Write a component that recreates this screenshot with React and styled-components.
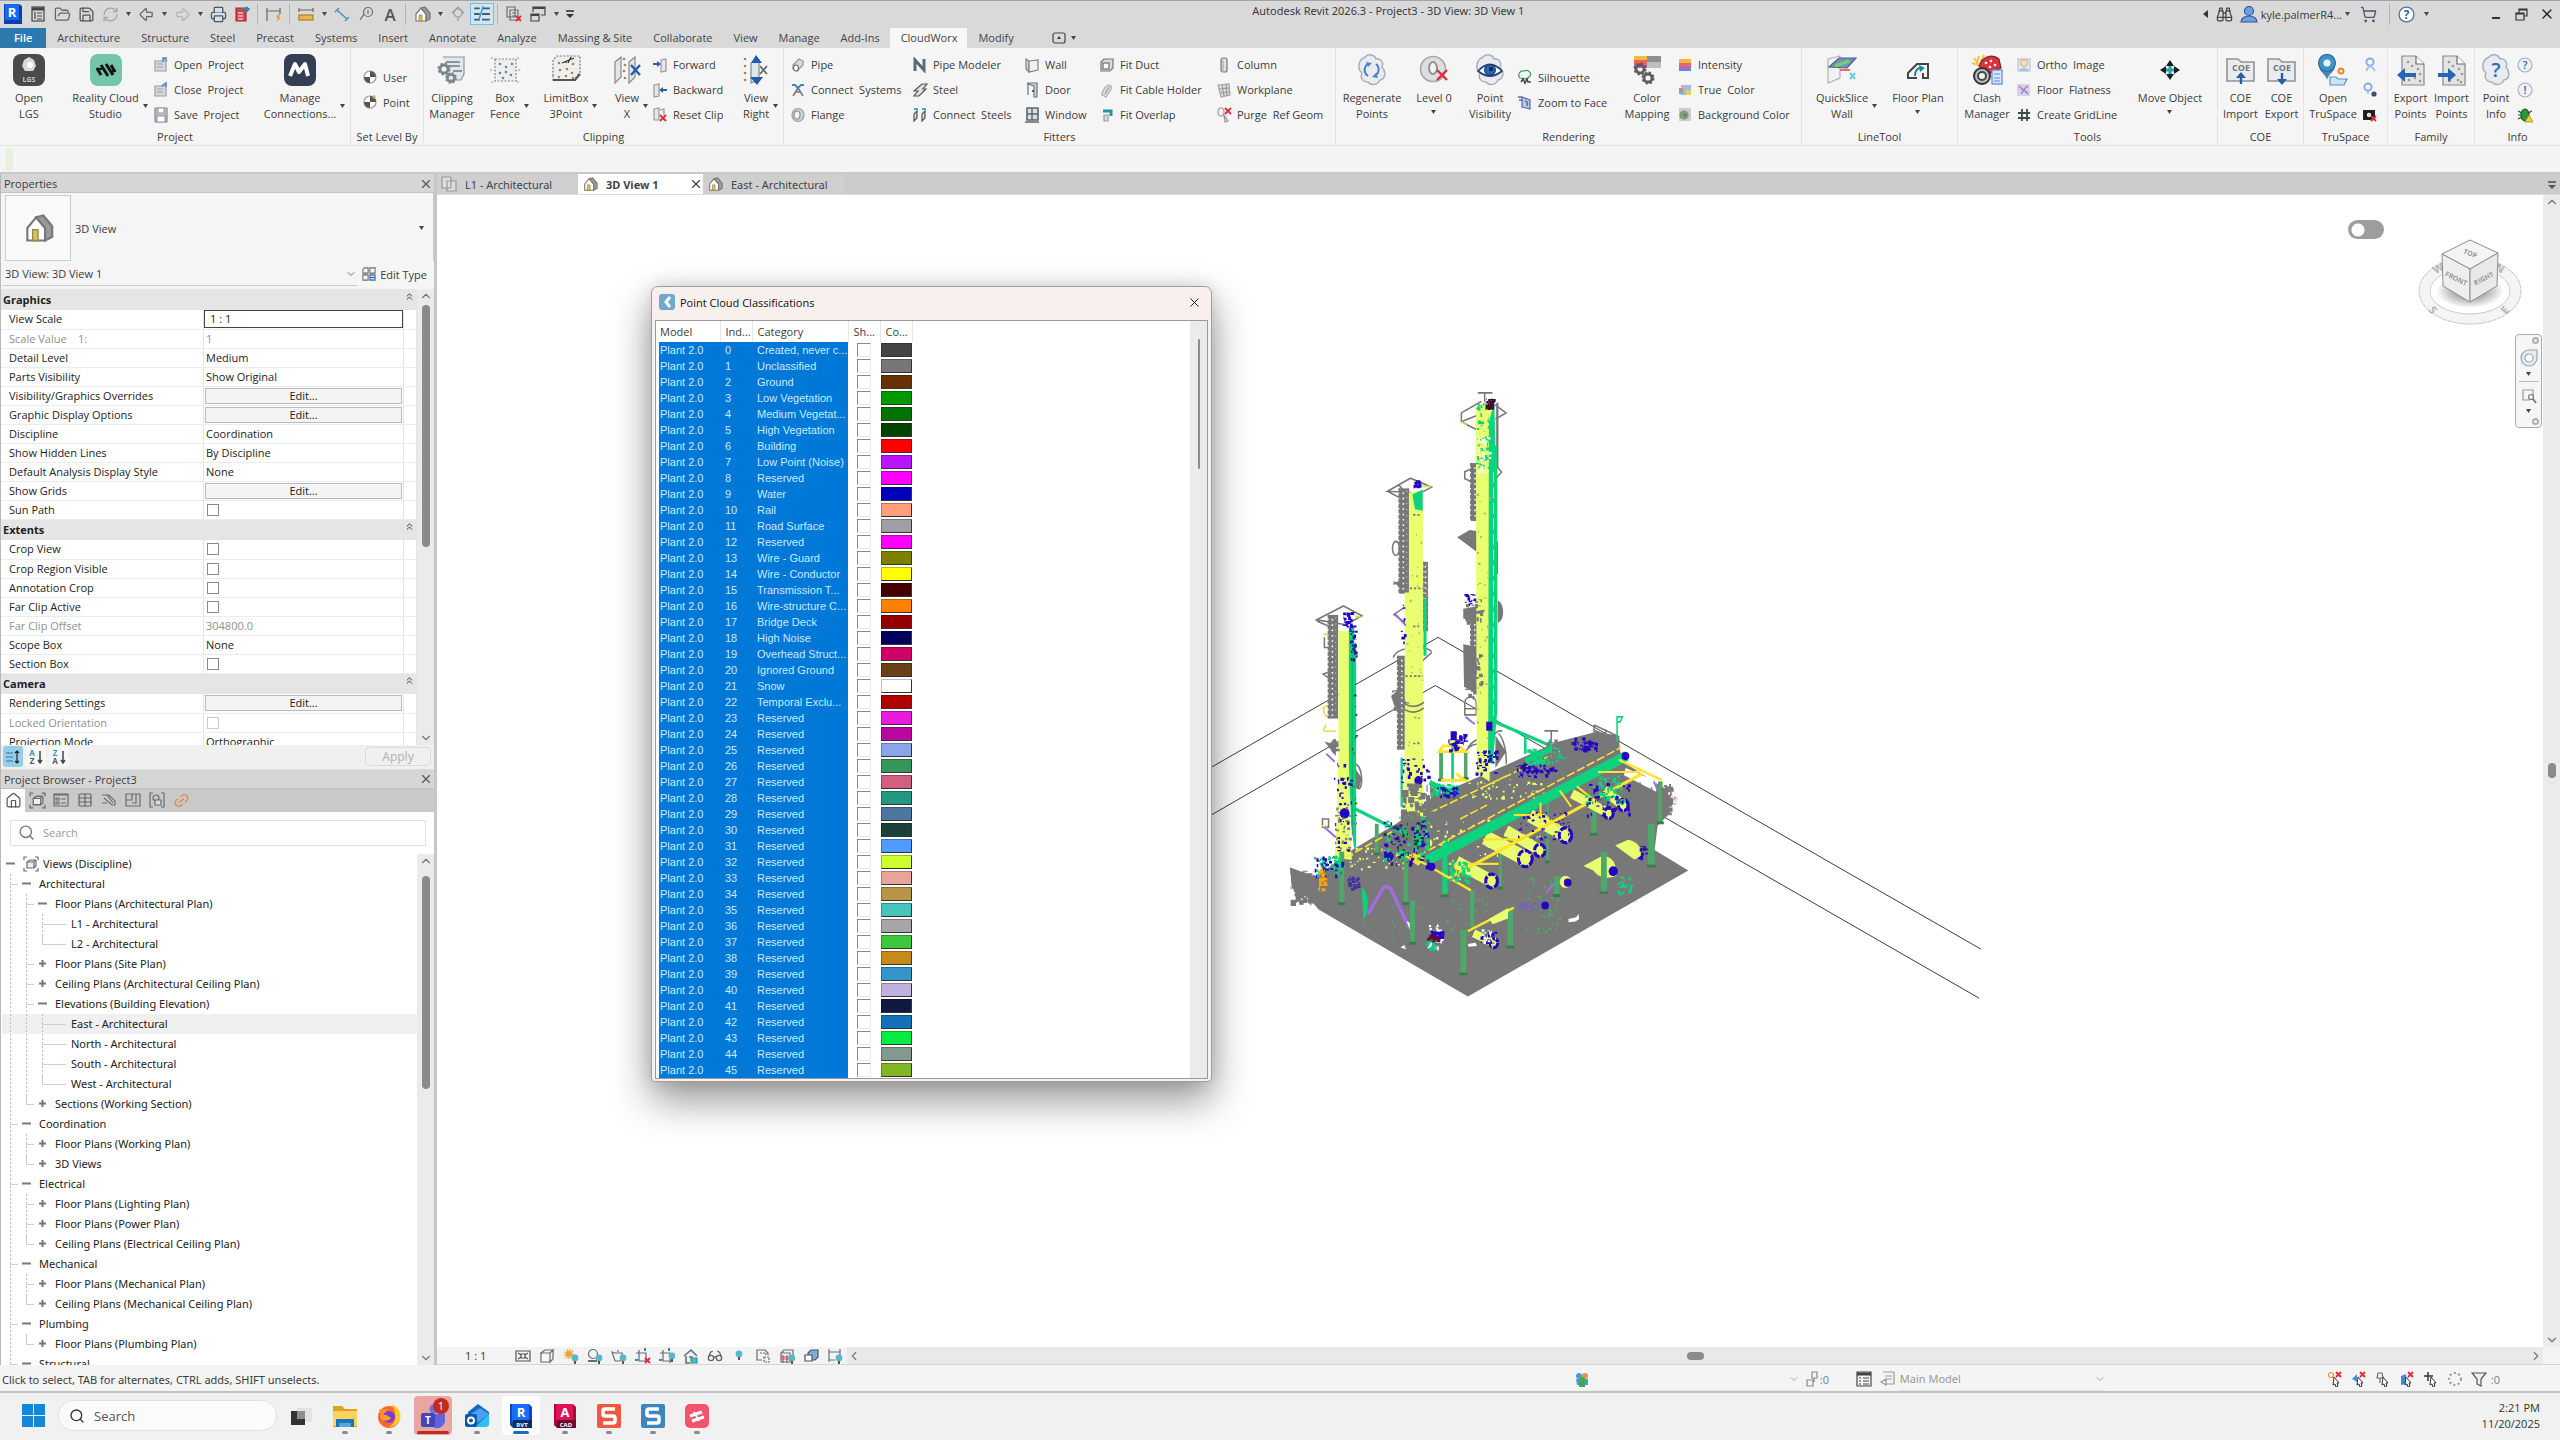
import React, { useState } from "react";
import styled, { createGlobalStyle, css } from "styled-components";
import {
  ArrowBigLeft,
  ArrowBigRight,
  Binoculars,
  ChevronDown,
  ChevronLeft,
  ChevronRight,
  ChevronUp,
  ChevronsUp,
  FolderOpen,
  Glasses,
  House,
  Link2,
  Printer,
  RefreshCw,
  Save,
  Search,
  ShoppingCart,
  Table,
  X,
} from "lucide-react";

const GlobalStyle = createGlobalStyle`
  * { box-sizing: border-box; }
  body {
    margin: 0;
    font-family: "Open Sans", "Noto Sans", sans-serif;
    font-size: 11px;
    color: #3c3c3c;
    background: #fff;
  }
  button, input, select {
    font: inherit;
    color: inherit;
    margin: 0;
    padding: 0;
    border: 0;
    background: none;
  }
  svg { display: block; flex: none; }
`;

const wideFont = `"Noto Sans", "Open Sans", sans-serif`;

/* ---------- small drawings ---------- */

const Ico = ({ s = 16, v = 16, children }) => (
  <svg width={s} height={s} viewBox={`0 0 ${v} ${v}`} fill="none" stroke="#666d74" strokeWidth="1.2">
    {children}
  </svg>
);

const Big = ({ children }) => (
  <Ico s={32} v={32}>
    {children}
  </Ico>
);

const Caret = () => (
  <svg width="5" height="4" viewBox="0 0 5 4">
    <path d="M0 0h5L2.5 4z" fill="#444" />
  </svg>
);

const blob =
  "M9 3c4-4 10-2 11 2 5-1 8 4 6 8 4 4 4 12-2 13-2 5-9 6-12 2-6 0-8-5-6-9-5-4-4-13 3-16z";

const Blob = () => <path d={blob} fill="#e8ecf0" stroke="#a9b0b7" strokeWidth="1.5" />;

const Gear = ({ x, y, r, c = "#7c848b" }) => (
  <g>
    <circle cx={x} cy={y} r={r} stroke={c} strokeWidth={r * 0.7} />
    <circle cx={x} cy={y} r={r * 1.4} stroke={c} strokeWidth={r * 0.45} strokeDasharray={`${r * 0.6} ${r * 0.5}`} />
  </g>
);

const Dots = ({ c = "#a48355", pts }) => (
  <g fill={c} stroke="none">
    {pts.map(([x, y]) => (
      <circle key={`${x}-${y}`} cx={x} cy={y} r="1.3" />
    ))}
  </g>
);

const grid9 = [[9, 9], [16, 8], [23, 10], [10, 16], [17, 15], [22, 19], [9, 23], [16, 22], [23, 24]];

const RedX = ({ x, y, s = 5 }) => (
  <path d={`M${x} ${y}l${s} ${s}m0 ${-s}l${-s} ${s}`} stroke="#e02b35" strokeWidth={s > 6 ? 2.4 : 1.8} />
);

const Bulb = ({ x, y }) => (
  <g stroke="none">
    <circle cx={x} cy={y} r="3.4" fill="#57b9c6" />
    <rect x={x - 1} y={y + 3} width="2" height="3" fill="#555" />
  </g>
);

const Folder32 = () => (
  <path d="M2 5h11l3 3h13v19H2z" fill="#e9ebed" stroke="#8d949a" strokeWidth="1.6" />
);

const big = {
  lgs: (
    <Big>
      <rect x="0" y="0" width="32" height="32" rx="8" fill="#4a4a4a" stroke="none" />
      <path d="M11 6l5-3 5 3 2 6-3 5h-8l-3-5z" fill="#d9d9d9" stroke="none" />
      <circle cx="17" cy="11" r="3" fill="#fff" stroke="none" />
      <text x="16" y="28" fontSize="7" fontWeight="700" textAnchor="middle" fill="#ccc" stroke="none">LGS</text>
    </Big>
  ),
  reality: (
    <Big>
      <rect width="32" height="32" rx="8" fill="#73c5ab" stroke="none" />
      <path d="M7 14l4 7M11 11l7 11M16 10l7 11M21 11l4 7" stroke="#151515" strokeWidth="3" />
      <path d="M6 15h6M20 17h6" stroke="#151515" strokeWidth="2" />
    </Big>
  ),
  manage: (
    <Big>
      <rect width="32" height="32" rx="8" fill="#343e54" stroke="none" />
      <path d="M6 22l5-12 4 8 6-8 3 12" stroke="#fff" strokeWidth="4" strokeLinejoin="round" />
    </Big>
  ),
  clipManager: (
    <Big>
      <path d="M7 3h21v17l-3 6H14" fill="#dfe8ee" stroke="#8b959d" />
      <path d="M10 8h14M10 12h14M17 17h9" stroke="#8b959d" strokeWidth="2" />
      <Gear x={8} y={15} r={4} />
      <Gear x={15} y={24} r={3.6} />
    </Big>
  ),
  boxFence: (
    <Big>
      <rect x="6" y="5" width="21" height="22" fill="#eceff1" stroke="#80878d" strokeDasharray="2 1.5" />
      <Dots c="#79828a" pts={[[11, 10], [17, 13], [23, 10], [11, 19], [17, 18], [22, 21], [14, 24]]} />
      <Dots c="#c9ced2" pts={[[3, 4], [29, 4], [3, 28], [29, 28], [2, 16], [30, 16]]} />
    </Big>
  ),
  limitBox: (
    <Big>
      <path d="M3 22V6l4-4h23v16l-6 8H3z" fill="#efefed" stroke="#777" strokeDasharray="2 1.5" />
      <Dots pts={grid9} />
      <path d="M3 26h22l5-6" stroke="#555" strokeWidth="2" />
      <path d="M24 4L12 9M21 3l-3 6" stroke="#333" />
    </Big>
  ),
  viewX: (
    <Big>
      <path d="M4 8l6-5v20l-6 6zM18 8l6-5v20l-6 6z" fill="#e3e6e8" stroke="#858c92" />
      <Dots pts={[[13, 5], [14, 11], [13, 17], [14, 24]]} />
      <path d="M20 11l9 10m0-10l-9 10" stroke="#1f5db0" strokeWidth="2.4" />
    </Big>
  ),
  viewRight: (
    <Big>
      <path d="M11 9l8-3v20l-8 3z" fill="#e3e6e8" stroke="#858c92" />
      <path d="M11 9L16 1l6 8zM10 23h13l-6 8z" fill="#1f5db0" stroke="none" />
      <Dots pts={[[5, 5], [5, 12], [5, 19], [5, 26]]} />
      <path d="M20 12l7 8m0-8l-7 8" stroke="#666" strokeWidth="1.8" />
    </Big>
  ),
  regenerate: (
    <Big>
      <Blob />
      <path d="M12 10a7 7 0 0 0 0 12M20 21a7 7 0 0 0 0-11" stroke="#4a82cc" strokeWidth="2" />
      <path d="M10 8l6 1-4 4zM22 24l-6-1 4-4z" fill="#4a82cc" stroke="none" />
    </Big>
  ),
  level: (
    <Big>
      <circle cx="15" cy="15" r="12.5" fill="#dcdfe1" stroke="#a4a9ad" strokeWidth="1.6" />
      <ellipse cx="15" cy="14" rx="4" ry="6" fill="#f3f3f3" stroke="#8d9398" strokeWidth="2" />
      <RedX x={19} y={16} s={10} />
    </Big>
  ),
  visibility: (
    <Big>
      <Blob />
      <path d="M4 17Q16 4 28 17 16 27 4 17z" fill="#fff" stroke="#23497d" strokeWidth="1.8" />
      <circle cx="16" cy="16" r="5.4" fill="#2b64b8" stroke="#173b70" />
      <circle cx="17" cy="15" r="2" fill="#0f2340" stroke="none" />
    </Big>
  ),
  colorMap: (
    <Big>
      <path d="M3 2h13v4H3z" fill="#f3bb3b" stroke="none" />
      <path d="M3 6h13v4H3z" fill="#ef5d5d" stroke="none" />
      <path d="M3 10h13v4H3z" fill="#d25cbb" stroke="none" />
      <path d="M16 2h14v12H16z" fill="#8f8f8f" stroke="none" />
      <path d="M16 8h14v6H16z" fill="#bdbdbd" stroke="none" />
      <Gear x={9} y={15} r={4} c="#5d5d5d" />
      <Gear x={17} y={24} r={4} c="#5d5d5d" />
    </Big>
  ),
  quickSlice: (
    <Big>
      <path d="M2 5l12-3v22L2 29z" fill="#f2f2f2" stroke="#b3b3b3" />
      <path d="M3 13L13 4h17l-9 10z" fill="#6b94c7" stroke="#3f6597" />
      <path d="M9 12l14-5" stroke="#7ccf5a" strokeWidth="3" />
      <path d="M14 16h10" stroke="#ef6a6a" strokeWidth="2" />
      <path d="M24 19l5 6m0-6l-5 6" stroke="#6ccae8" strokeWidth="2" />
    </Big>
  ),
  floorPlan: (
    <Big>
      <path d="M15 24H6v-5l9-9h11v14h-5v-5" stroke="#444" strokeWidth="2" />
      <path d="M13 22c0-5 2-8 6-8" stroke="#168898" strokeWidth="2" />
      <path d="M17 11l6 3-5 4z" fill="#168898" stroke="none" />
    </Big>
  ),
  clash: (
    <Big>
      <path d="M8 2l-2 6M3 4l4 6M1 9l6 2M13 1l-3 6" stroke="#ffc234" strokeWidth="2" />
      <path d="M8 12c3-9 13-13 20-7l2 9-13 6z" fill="#d9333e" stroke="#7e232a" />
      <Dots c="#fff" pts={[[15, 9], [20, 7], [24, 11], [19, 13]]} />
      <circle cx="11" cy="22" r="8" fill="#b9bcbf" stroke="#333" strokeWidth="2" />
      <circle cx="11" cy="22" r="4" fill="#f0f0f0" stroke="#444" strokeWidth="2" />
      <rect x="21" y="16" width="10" height="14" fill="#dbe9ff" stroke="#5b85d9" />
      <path d="M23 20h6M23 24h6M23 27h6" stroke="#5b85d9" />
    </Big>
  ),
  move: (
    <Big>
      <path d="M16 6l4 6h-8zM16 26l4-6h-8zM6 16l6-4v8zM26 16l-6-4v8z" fill="#1d1d1d" stroke="none" />
      <path d="M12 16h8M16 12v8" stroke="#28a5b5" strokeWidth="3" />
    </Big>
  ),
  coeImport: (
    <Big>
      <Folder32 />
      <text x="16" y="17" fontSize="9" fontWeight="700" textAnchor="middle" fill="#70777d" stroke="none">COE</text>
      <path d="M16 30v-8" stroke="#285ea8" strokeWidth="2.4" />
      <path d="M11 24l5-6 5 6z" fill="#285ea8" stroke="none" />
    </Big>
  ),
  coeExport: (
    <Big>
      <Folder32 />
      <text x="16" y="17" fontSize="9" fontWeight="700" textAnchor="middle" fill="#70777d" stroke="none">COE</text>
      <path d="M16 19v8" stroke="#285ea8" strokeWidth="2.4" />
      <path d="M11 25l5 6 5-6z" fill="#285ea8" stroke="none" />
    </Big>
  ),
  truSpace: (
    <Big>
      <path d="M2 12c0 6 7 8 8 14 1-6 8-8 8-14z" fill="#4f83b5" stroke="none" />
      <circle cx="10" cy="9" r="8.5" fill="#3e93cb" stroke="#316a98" />
      <circle cx="10" cy="9" r="3.6" fill="#e7f2fa" stroke="none" />
      <circle cx="24" cy="17" r="2.5" stroke="#e8852d" strokeWidth="2" />
      <path d="M13 23h6l2 2h9l-3 6H13z" fill="#cfe2f2" stroke="#5e93bd" />
    </Big>
  ),
  exportPts: (
    <Big>
      <path d="M7 2h14l8 8v21H7z" fill="#e4e5e3" stroke="#86898b" />
      <path d="M21 2v8h8" fill="#fff" />
      <Dots c="#9c9985" pts={[[13, 8], [17, 12], [23, 15], [14, 26], [20, 24], [25, 27], [25, 20]]} />
      <path d="M21 21H8" stroke="#2a64b4" strokeWidth="4" />
      <path d="M10 14v14l-8-7z" fill="#2a64b4" stroke="none" />
    </Big>
  ),
  importPts: (
    <Big>
      <path d="M7 2h14l8 8v21H7z" fill="#e4e5e3" stroke="#86898b" />
      <path d="M21 2v8h8" fill="#fff" />
      <Dots c="#9c9985" pts={[[13, 8], [17, 12], [23, 15], [14, 27], [22, 26], [25, 28], [26, 20]]} />
      <path d="M2 21h12" stroke="#2a64b4" strokeWidth="4" />
      <path d="M12 14v14l8-7z" fill="#2a64b4" stroke="none" />
    </Big>
  ),
  pointInfo: (
    <Big>
      <Blob />
      <text x="16" y="23" fontSize="20" fontWeight="600" textAnchor="middle" fill="#3165b5" stroke="none">?</text>
    </Big>
  ),
};

const ProjectDoc = ({ arrow }) => (
  <Ico>
    <path d="M2 4h11v10H2z" fill="#d5d9dc" stroke="#9aa0a5" />
    <path d="M4 7h6M4 10h6" stroke="#9aa0a5" />
    <path d={arrow} stroke="#4f8cc9" strokeWidth="1.6" />
  </Ico>
);

const Target = ({ extra }) => (
  <Ico>
    <circle cx="8" cy="8" r="6" fill="#fff" stroke="#999" />
    <path d="M8 2a6 6 0 0 1 6 6H8zM8 14a6 6 0 0 1-6-6h6z" fill="#555" stroke="none" />
    {extra}
  </Ico>
);

const small = {
  open: <ProjectDoc arrow="M10 5V1h4M11 1l3 3" />,
  close: <ProjectDoc arrow="M9 4l4-3v4" />,
  save: (
    <Ico>
      <path d="M2 1h12v14H2z" fill="#b9bec3" stroke="#888e94" />
      <path d="M5 1h6v5H5zM4 9h8v6H4z" fill="#fff" stroke="#9aa0a5" />
    </Ico>
  ),
  user: <Target />,
  point: <Target extra={<path d="M12 1v4M10 3h4" stroke="#e0a23a" />} />,
  forward: (
    <Ico>
      <path d="M9 3l5-1v12l-5 1z" fill="#e5e5e5" stroke="#999" />
      <path d="M1 7h5" stroke="#2461b0" strokeWidth="2" />
      <path d="M5 4l4 3-4 3z" fill="#2461b0" stroke="none" />
    </Ico>
  ),
  backward: (
    <Ico>
      <path d="M2 3l5-1v12l-5 1z" fill="#e5e5e5" stroke="#999" />
      <path d="M10 8h5" stroke="#2461b0" strokeWidth="2" />
      <path d="M11 5v6L7 8z" fill="#2461b0" stroke="none" />
    </Ico>
  ),
  reset: (
    <Ico>
      <path d="M2 2l5-1v12H2zM8 3l4-1v6" fill="#e5e5e5" stroke="#999" />
      <RedX x={8} y={8} s={6} />
    </Ico>
  ),
  pipe: (
    <Ico>
      <path d="M3 8l6-6 4 2v4l-6 6-4-2z" fill="#d9dcdf" stroke="#8d9398" />
      <ellipse cx="6" cy="11" rx="2.5" ry="3" fill="#fff" />
    </Ico>
  ),
  connectSys: (
    <Ico>
      <path d="M2 3h3l3 3 3-3h3" stroke="#4586b8" strokeWidth="2" />
      <path d="M8 6L3 14M8 6l5 8M5 10h6" stroke="#757b80" strokeWidth="1.6" />
    </Ico>
  ),
  flange: (
    <Ico>
      <ellipse cx="8" cy="8" rx="6" ry="6.5" fill="#cfd3d6" stroke="#9ba0a5" />
      <ellipse cx="7" cy="8" rx="3" ry="4" fill="#f5f5f5" stroke="#888e94" />
    </Ico>
  ),
  pipeModeler: (
    <Ico>
      <path d="M3 14V3l9 10V2" stroke="#5e6a75" strokeWidth="3" />
    </Ico>
  ),
  steel: (
    <Ico>
      <path d="M2 9l8-7h5l-4 5h3l-7 7H2l4-5z" fill="#e0e2e4" stroke="#555" />
    </Ico>
  ),
  connectSteels: (
    <Ico>
      <path d="M2 2h4M10 2h4" stroke="#32b5bd" strokeWidth="2" />
      <path d="M2 14V7l3-3v7zM10 14V7l3-3v7z" fill="#d5d8da" stroke="#555" />
    </Ico>
  ),
  wall: (
    <Ico>
      <path d="M2 2l3 2v11l-3-3z" fill="#cfd6da" stroke="#7d858b" />
      <path d="M5 4l9-1v10l-9 2z" fill="#eef1f3" stroke="#7d858b" />
    </Ico>
  ),
  door: (
    <Ico>
      <path d="M3 1h10v14h-3V4L4 2v11" fill="#cfd6da" stroke="#6c747a" />
      <circle cx="9" cy="9" r="1" fill="#333" stroke="none" />
    </Ico>
  ),
  window: (
    <Ico>
      <path d="M3 1h11v12H3z" fill="#d7dfe7" stroke="#5c656d" strokeWidth="1.6" />
      <path d="M8 1v12M3 7h11M1 15h14" stroke="#5c656d" strokeWidth="1.4" />
    </Ico>
  ),
  duct: (
    <Ico>
      <path d="M2 5l3-3h9v9l-3 3H2z" fill="#d9dcde" stroke="#777" />
      <rect x="4" y="6" width="6" height="6" fill="#fff" />
    </Ico>
  ),
  cable: (
    <Ico>
      <path d="M3 13c0-4 4-10 7-10s3 3 1 6l-4 6z" fill="#dadcde" stroke="#a9adb0" />
      <path d="M6 12l4-7" stroke="#999" />
    </Ico>
  ),
  overlap: (
    <Ico>
      <path d="M4 4h8v5" stroke="#2b8fa8" strokeWidth="3" />
      <path d="M5 8h4v6H5z" fill="#d8dcdf" stroke="#999" />
    </Ico>
  ),
  column: (
    <Ico>
      <rect x="5" y="1" width="6" height="14" rx="2" fill="#e0e3e5" stroke="#777" />
      <path d="M7 3v11" stroke="#aaa" />
    </Ico>
  ),
  workplane: (
    <Ico>
      <path d="M2 3l11-1 1 11-9 2z" fill="#dcdcdc" stroke="#a5a5a5" />
      <path d="M6 3l2 11M10 2l1 12M3 7l11-1M4 11l10-1" stroke="#999" />
    </Ico>
  ),
  purge: (
    <Ico>
      <ellipse cx="5" cy="5" rx="3" ry="4" stroke="#999" />
      <path d="M8 8l4 6-3 1z" fill="#ddd" stroke="#999" />
      <RedX x={9} y={1} s={6} />
    </Ico>
  ),
  silhouette: (
    <Ico>
      <path d="M3 9C0 6 3 1 7 2c4-2 8 2 6 5l-3 3z" fill="#eef7f1" stroke="#3f9a66" />
      <path d="M4 13l2-3 2 4 2-4 1 3h3" stroke="#444" strokeWidth="1.5" />
    </Ico>
  ),
  zoomFace: (
    <Ico>
      <path d="M5 3l8 3v9l-8-2z" fill="#b9c7e4" stroke="#5a6fa5" />
      <path d="M1 3h4M2 6h4M8 7c2 0 3 2 2 5" stroke="#5a6fa5" strokeWidth="1.5" />
    </Ico>
  ),
  intensity: (
    <Ico>
      <path d="M2 2h12v4H2z" fill="#f2b73d" stroke="none" />
      <path d="M2 6h12v4H2z" fill="#ee5f74" stroke="none" />
      <path d="M2 10h12v4H2z" fill="#7a7ddb" stroke="none" />
    </Ico>
  ),
  trueColor: (
    <Ico>
      <path d="M4 3h10v10H4z" fill="#8fc4e8" stroke="none" />
      <path d="M4 3h5v5H4z" fill="#f09fbd" stroke="none" />
      <path d="M9 8h5v5H9z" fill="#f1cf57" stroke="none" />
      <path d="M2 6h4v6H2z" fill="#9a9fa5" stroke="none" />
    </Ico>
  ),
  background: (
    <Ico>
      <rect x="2" y="1" width="12" height="13" fill="#ccc" stroke="none" />
      <circle cx="7" cy="8" r="4" fill="#63b07f" stroke="#8f8f8f" />
      <circle cx="8" cy="8" r="1.6" fill="#d9484e" stroke="none" />
    </Ico>
  ),
  ortho: (
    <Ico>
      <rect x="2" y="2" width="12" height="12" fill="#dfe9f4" stroke="#b7c7da" />
      <circle cx="8" cy="6" r="3.4" fill="#f6dfb9" stroke="#d8b685" />
      <path d="M3 14c1-4 9-4 10 0z" fill="#a9bfdc" stroke="none" />
    </Ico>
  ),
  flatness: (
    <Ico>
      <rect x="1" y="2" width="13" height="12" fill="#d8d0ec" stroke="none" />
      <path d="M3 4l4 4 5-4M5 12l3-4 4 4" stroke="#9a78bb" />
    </Ico>
  ),
  gridLine: (
    <Ico>
      <path d="M6 2v12M11 2v12M2 6h12M2 11h12" stroke="#3f4b4b" strokeWidth="1.8" />
    </Ico>
  ),
  pin: (
    <Ico>
      <circle cx="8" cy="5" r="3.6" stroke="#83aee8" strokeWidth="2" />
      <path d="M8 9c-2 2-4 2-3 5M8 9c3 1 4 3 5 5" stroke="#a6c6f0" strokeWidth="2" />
    </Ico>
  ),
  pinCam: (
    <Ico>
      <circle cx="6" cy="5" r="3.6" stroke="#83aee8" strokeWidth="2" />
      <path d="M6 9v3" stroke="#a6c6f0" strokeWidth="2" />
      <circle cx="12" cy="12" r="2.6" fill="#3e4c6d" stroke="none" />
    </Ico>
  ),
  camX: (
    <Ico>
      <path d="M1 3h12v10H1z" fill="#222" stroke="none" />
      <circle cx="7" cy="8" r="3" fill="#ddd" stroke="#000" />
      <RedX x={9} y={9} s={5} />
    </Ico>
  ),
  ask: (
    <Ico>
      <circle cx="8" cy="8" r="7" fill="#eef1f5" stroke="#a8afb7" />
      <text x="8" y="12" fontSize="11" fontWeight="600" textAnchor="middle" fill="#3165b5" stroke="none">?</text>
    </Ico>
  ),
  alert: (
    <Ico>
      <circle cx="8" cy="8" r="7" fill="#eef1f5" stroke="#a8afb7" />
      <text x="8" y="12" fontSize="11" fontWeight="600" textAnchor="middle" fill="#3165b5" stroke="none">!</text>
    </Ico>
  ),
  bug: (
    <Ico>
      <ellipse cx="8" cy="8" rx="4" ry="6" fill="#259a36" stroke="#145c20" />
      <path d="M1 4l4 2M1 8h3M1 12l4-2M15 4l-4 2" stroke="#145c20" />
      <path d="M12 8l4 7H8z" fill="#f1d335" stroke="#a78f14" strokeWidth="0.8" />
    </Ico>
  ),
};

const Cube = ({ s = 16 }) => (
  <Ico s={s}>
    <path d="M2 5l4-3h8l-3 3zM2 5h9v9H2zM11 5l3-3v9l-3 3z" fill="#f7f7f7" />
  </Ico>
);

const FramedCube = ({ s = 17 }) => (
  <Ico s={s}>
    <path d="M1 4V1h3M12 1h3v3M15 12v3h-3M4 15H1v-3" />
    <path d="M4 6l3-2h5l-1 2v6H4zM4 6h7M11 12l2-2V4" fill="#eee" />
  </Ico>
);

const HouseIcon = ({ s = 18 }) => (
  <Ico s={s} v={18}>
    <path d="M3 9l5-6 5 6v7H3z" fill="#fff" stroke="#777" />
    <path d="M8 3l4-1 5 6v6l-4 2V9z" fill="#9a9a9a" stroke="#777" />
    <path d="M6 10h3v6H6z" fill="#dcc15a" stroke="#9a8a4a" strokeWidth="0.8" />
  </Ico>
);

/* ---------- title bar and ribbon ---------- */

const App_ = styled.div`
  display: flex;
  flex-direction: column;
  height: 100vh;
  overflow: hidden;
  background: #f5f5f5;
`;

const TitleBar = styled.header`
  display: flex;
  align-items: flex-start;
  height: 28px;
  padding-top: 2px;
  background: #d9d9d9;
  border-top: 1px solid #a3a3a3;
`;

const Tools = styled.div`
  display: flex;
  align-items: center;
`;

const Tool = styled.button`
  display: flex;
  align-items: center;
  justify-content: center;
  width: ${(p) => p.$w || 24}px;
  height: 22px;
  ${(p) =>
    p.$on &&
    css`
      background: #cde6f4;
      border: 1px solid #7fbbe0;
    `}
`;

const Sep = styled.span`
  width: 1px;
  height: 22px;
  margin: 0 4px 0 3px;
  background: #b5b5b5;
`;

const Title = styled.h1`
  flex: 1;
  margin: 0;
  font-family: ${wideFont};
  font-size: 11px;
  font-weight: 400;
  line-height: 16px;
  text-align: center;
  white-space: nowrap;
`;

const UserName = styled.button`
  display: flex;
  align-items: center;
  gap: 3px;
  height: 22px;
`;

const LetterA = styled.b`
  font-size: 17px;
  font-weight: 600;
  color: #555;
`;

const Tabs = styled.nav`
  display: flex;
  height: 20px;
  background: #d9d9d9;
`;

const RibbonTab = styled.a`
  padding: 0 10px 0 11px;
  line-height: 20px;
  color: #444;
  text-decoration: none;
  white-space: nowrap;
  ${(p) => p.$kind === "file" && css`background: #2a7ab0; color: #fff; padding: 0 14px; font-weight: 600;`}
  ${(p) => p.$kind === "active" && css`background: #f7f7f7;`}
`;

const Collapse = styled(Tool)`
  width: 40px;
  height: 20px;
  gap: 5px;
  margin-left: 20px;
`;

const Ribbon = styled.div`
  display: flex;
  height: 98px;
  background: #f5f5f5;
  border-bottom: 1px solid #e2e2e2;
`;

const Group = styled.section`
  display: flex;
  flex-direction: column;
  flex: 0 0 ${(p) => p.$w}px;
  padding-top: 4px;
  border-right: 1px solid #e3e3e3;
  &:last-child { flex: 1; border: 0; }
`;

const GroupBody = styled.div`
  display: flex;
  flex: none;
  height: 75px;
  padding-left: ${(p) => p.$pad || 0}px;
`;

const GroupTitle = styled.h2`
  margin: 0;
  padding-top: 1px;
  font-size: 11px;
  font-weight: 400;
  line-height: 17px;
  text-align: center;
`;

const BigBtn = styled.button`
  display: flex;
  flex-direction: column;
  align-items: center;
  flex: 0 0 ${(p) => p.$w}px;
  padding-top: 2px;
`;

const BigLabel = styled.span`
  display: flex;
  align-items: center;
  flex-direction: ${(p) => (p.$below ? "column" : "row")};
  gap: 4px;
  margin-top: 4px;
  padding-left: ${(p) => (p.$side ? 9 : 0)}px;
  line-height: 16px;
  white-space: nowrap;
`;

const Stack = styled.div`
  display: flex;
  flex-direction: column;
  justify-content: center;
  flex: 0 0 ${(p) => p.$w}px;
`;

const SmallBtn = styled.button`
  display: flex;
  align-items: center;
  gap: 5px;
  height: 25px;
  white-space: pre;
`;

const OptionsBar = styled.div`
  display: flex;
  height: 28px;
  padding: 2px 0 2px 6px;
  background: #f4f4f4;
  border-bottom: 2px solid #c9c9c9;
`;

const OptionGrip = styled.span`
  width: 7px;
  background: #eaf0e0;
`;

function BigButton({ icon, lines, w, caret }) {
  return (
    <BigBtn $w={w}>
      {big[icon]}
      <BigLabel $side={caret === "side"} $below={caret === "below"}>
        <span>
          {lines[0]}
          {lines[1] && <br />}
          {lines[1]}
        </span>
        {caret && <Caret />}
      </BigLabel>
    </BigBtn>
  );
}

function SmallStack({ w, items }) {
  return (
    <Stack $w={w}>
      {items.map(([icon, text]) => (
        <SmallBtn key={icon} aria-label={text || icon}>
          {small[icon]}
          {text}
        </SmallBtn>
      ))}
    </Stack>
  );
}

const groups = [
  {
    title: "Project", w: 351, pad: 0,
    items: [
      ["lgs", ["Open", "LGS"], 58],
      ["reality", ["Reality Cloud", "Studio"], 95, "side"],
      [100, ["open", "Open  Project"], ["close", "Close  Project"], ["save", "Save  Project"]],
      ["manage", ["Manage", "Connections..."], 94, "side"],
    ],
  },
  { title: "Set Level By", w: 73, pad: 11, items: [[60, ["user", "User"], ["point", "Point"]]] },
  {
    title: "Clipping", w: 360, pad: 0,
    items: [
      ["clipManager", ["Clipping", "Manager"], 56],
      ["boxFence", ["Box", "Fence"], 50, "side"],
      ["limitBox", ["LimitBox", "3Point"], 72, "side"],
      ["viewX", ["View", "X"], 50, "side"],
      [80, ["forward", "Forward"], ["backward", "Backward"], ["reset", "Reset Clip"]],
      ["viewRight", ["View", "Right"], 48, "side"],
    ],
  },
  {
    title: "Fitters", w: 552, pad: 6,
    items: [
      [122, ["pipe", "Pipe"], ["connectSys", "Connect  Systems"], ["flange", "Flange"]],
      [112, ["pipeModeler", "Pipe Modeler"], ["steel", "Steel"], ["connectSteels", "Connect  Steels"]],
      [75, ["wall", "Wall"], ["door", "Door"], ["window", "Window"]],
      [117, ["duct", "Fit Duct"], ["cable", "Fit Cable Holder"], ["overlap", "Fit Overlap"]],
      [112, ["column", "Column"], ["workplane", "Workplane"], ["purge", "Purge  Ref Geom"]],
    ],
  },
  {
    title: "Rendering", w: 466, pad: 3,
    items: [
      ["regenerate", ["Regenerate", "Points"], 66],
      ["level", ["Level 0"], 58, "below"],
      ["visibility", ["Point", "Visibility"], 54],
      [100, ["silhouette", "Silhouette"], ["zoomFace", "Zoom to Face"]],
      ["colorMap", ["Color", "Mapping"], 60],
      [118, ["intensity", "Intensity"], ["trueColor", "True  Color"], ["background", "Background Color"]],
    ],
  },
  {
    title: "LineTool", w: 156, pad: 0,
    items: [
      ["quickSlice", ["QuickSlice", "Wall"], 80, "side"],
      ["floorPlan", ["Floor Plan"], 72, "below"],
    ],
  },
  {
    title: "Tools", w: 260, pad: 0,
    items: [
      ["clash", ["Clash", "Manager"], 58],
      [112, ["ortho", "Ortho  Image"], ["flatness", "Floor  Flatness"], ["gridLine", "Create GridLine"]],
      ["move", ["Move Object"], 84, "below"],
    ],
  },
  {
    title: "COE", w: 86, pad: 2,
    items: [["coeImport", ["COE", "Import"], 41], ["coeExport", ["COE", "Export"], 41]],
  },
  {
    title: "TruSpace", w: 84, pad: 0,
    items: [["truSpace", ["Open", "TruSpace"], 58], [24, ["pin"], ["pinCam"], ["camX"]]],
  },
  {
    title: "Family", w: 87, pad: 2,
    items: [["exportPts", ["Export", "Points"], 41], ["importPts", ["Import", "Points"], 41]],
  },
  {
    title: "Info", w: 86, pad: 0,
    items: [["pointInfo", ["Point", "Info"], 42], [24, ["ask"], ["alert"], ["bug"]]],
  },
];

const tabNames = [
  "Architecture", "Structure", "Steel", "Precast", "Systems", "Insert", "Annotate", "Analyze",
  "Massing & Site", "Collaborate", "View", "Manage", "Add-Ins", "CloudWorx", "Modify",
];

const lu = { size: 17, color: "#666", strokeWidth: 1.8 };

function TopBar() {
  return (
    <TitleBar>
      <Tools>
        <Tool $w={26} aria-label="Revit">
          <Ico s={20} v={20}>
            <path d="M1 0h15l3 2v18H1z" fill="#0b3fae" stroke="none" />
            <path d="M2 0h14v16H2z" fill="#1768f0" stroke="none" />
            <text x="9" y="13" fontSize="13" fontWeight="700" textAnchor="middle" fill="#fff" stroke="none">R</text>
          </Ico>
        </Tool>
        <Tool aria-label="Properties">
          <Ico>
            <rect x="2" y="1" width="12" height="14" stroke="#444" />
            <path d="M2 3h12" stroke="#444" strokeWidth="3" />
            <path d="M5 6v7M7 7h5M7 10h5M7 13h5" stroke="#444" />
          </Ico>
        </Tool>
        <Tool aria-label="Open"><FolderOpen {...lu} /></Tool>
        <Tool aria-label="Save"><Save {...lu} color="#555" /></Tool>
        <Tool aria-label="Synchronize"><RefreshCw {...lu} color="#a5a5a5" /></Tool>
        <Tool $w={12} aria-label="Synchronize menu"><Caret /></Tool>
        <Tool aria-label="Undo"><ArrowBigLeft {...lu} /></Tool>
        <Tool $w={12} aria-label="Undo menu"><Caret /></Tool>
        <Tool aria-label="Redo"><ArrowBigRight {...lu} color="#b5b5b5" /></Tool>
        <Tool $w={12} aria-label="Redo menu"><Caret /></Tool>
        <Tool aria-label="Print"><Printer {...lu} color="#555" fill="#cfe0ee" /></Tool>
        <Tool aria-label="PDF">
          <Ico>
            <path d="M2 2h10v13H2z" fill="#d5434a" stroke="#9c3036" />
            <path d="M4 7h5M4 10h5M4 13h5" stroke="#fff" />
            <path d="M8 3h6M12 1l3 2-3 3" stroke="#2b86c9" strokeWidth="1.6" />
          </Ico>
        </Tool>
        <Sep />
        <Tool aria-label="Measure">
          <Ico>
            <path d="M1 2v13M14 2v6M1 5h13" stroke="#666" />
            <path d="M12 8l-2 4h2l-1 4 4-5h-2l1-3z" fill="#e9a22b" stroke="none" />
          </Ico>
        </Tool>
        <Sep />
        <Tool aria-label="Dimension">
          <Ico>
            <path d="M1 2v4M15 2v4M1 4h14" stroke="#666" />
            <rect x="1" y="9" width="14" height="5" fill="#e9b749" stroke="#a58230" />
          </Ico>
        </Tool>
        <Tool $w={12} aria-label="Dimension menu"><Caret /></Tool>
        <Tool aria-label="Aligned">
          <Ico>
            <path d="M3 4l10 9M1 6l4-4M11 15l4-4" stroke="#4d95c4" strokeWidth="1.6" />
          </Ico>
        </Tool>
        <Tool aria-label="Tag">
          <Ico>
            <circle cx="10" cy="6" r="4.5" />
            <path d="M10 4v4M6 8l-4 6" />
          </Ico>
        </Tool>
        <Tool aria-label="Text"><LetterA>A</LetterA></Tool>
        <Sep />
        <Tool aria-label="Default 3D view"><HouseIcon s={18} /></Tool>
        <Tool $w={12} aria-label="3D view menu"><Caret /></Tool>
        <Tool aria-label="Section">
          <Ico>
            <circle cx="8" cy="7" r="4" stroke="#999" />
            <path d="M2 7l6-6 6 6M8 11v4" stroke="#999" />
          </Ico>
        </Tool>
        <Tool $on aria-label="Thin lines">
          <Ico s={18}>
            <path d="M1 3h5M1 8h5M1 13h5M8 3h7M8 8h7M8 13h7" stroke="#4b5a66" strokeWidth="1.6" />
            <path d="M9 1l-4 13" stroke="#3e8fc4" />
          </Ico>
        </Tool>
        <Sep />
        <Tool aria-label="Close inactive">
          <Ico>
            <path d="M1 1h8v10H1zM4 4h8v10H4z" fill="#ddd" />
            <path d="M6 7h4M6 10h4" />
            <RedX x={10} y={10} s={5} />
          </Ico>
        </Tool>
        <Tool aria-label="Switch windows">
          <Ico>
            <path d="M1 8h8v7H1zM3 6V1h12v8h-4" stroke="#444" />
            <path d="M3 2h12M1 9h8" stroke="#444" strokeWidth="2" />
          </Ico>
        </Tool>
        <Tool $w={12} aria-label="Windows menu"><Caret /></Tool>
        <Tool $w={16} aria-label="Customize">
          <Ico s={10} v={10}>
            <path d="M1 2h8" stroke="#333" strokeWidth="1.6" />
            <path d="M1 5h8l-4 4z" fill="#333" stroke="none" />
          </Ico>
        </Tool>
      </Tools>
      <Title>Autodesk Revit 2026.3 - Project3 - 3D View: 3D View 1</Title>
      <Tools>
        <Tool $w={14} aria-label="Collapse search">
          <Ico s={8} v={8}>
            <path d="M6 0v8L1 4z" fill="#333" stroke="none" />
          </Ico>
        </Tool>
        <Tool aria-label="Find"><Binoculars {...lu} color="#444" /></Tool>
        <Tool aria-label="Account">
          <Ico s={18} v={18}>
            <circle cx="9" cy="6" r="4.5" fill="#6f9fe0" stroke="#2c5796" />
            <path d="M1 17c0-4 4-6 8-6s8 2 8 6z" fill="#6f9fe0" stroke="#2c5796" />
          </Ico>
        </Tool>
        <UserName>kyle.palmerR4...<Caret /></UserName>
        <Tool $w={36} aria-label="Store"><ShoppingCart {...lu} color="#4a5674" /></Tool>
        <Sep />
        <Tool $w={24} aria-label="Help">
          <Ico s={17}>
            <circle cx="8" cy="8" r="7" fill="#fff" stroke="#51719c" />
            <text x="8" y="12" fontSize="11" fontWeight="700" textAnchor="middle" fill="#2d62ac" stroke="none">?</text>
          </Ico>
        </Tool>
        <Tool $w={16} aria-label="Help menu"><Caret /></Tool>
        <Tool $w={50} as="span" />
        <Tool aria-label="Minimize">
          <Ico s={12} v={12}><path d="M2 10h8" stroke="#333" strokeWidth="2" /></Ico>
        </Tool>
        <Tool $w={26} aria-label="Restore">
          <Ico s={13} v={13}>
            <path d="M1 5h8v7H1zM4 5V1h8v7H9M1 6h8M4 2h8" stroke="#333" />
          </Ico>
        </Tool>
        <Tool $w={26} aria-label="Close"><X size={16} color="#222" /></Tool>
      </Tools>
    </TitleBar>
  );
}

/* ---------- left column ---------- */

const Workspace = styled.main`
  display: flex;
  flex: 1;
  min-height: 0;
`;

const LeftColumn = styled.div`
  display: flex;
  flex-direction: column;
  flex: 0 0 437px;
  border-right: 3px solid #c6c6c6;
  border-left: 1px solid #b8b8b8;
`;

const Palette = styled.section`
  display: flex;
  flex-direction: column;
  flex: 1 1 0;
  min-height: 0;
`;

const PaletteTitle = styled.div`
  display: flex;
  align-items: center;
  justify-content: space-between;
  flex: none;
  height: 19px;
  padding: 1px 1px 0 3px;
  background: #d6d6d6;
  border-bottom: 1px solid #c2c2c2;
`;

const TypeRow = styled.button`
  display: flex;
  align-items: center;
  height: 68px;
  padding: 2px 9px 0 4px;
  border-right: 1px solid #ccc;
  text-align: left;
`;

const TypeThumb = styled.span`
  display: grid;
  place-items: center;
  width: 66px;
  height: 66px;
  margin-right: 4px;
  background: #f9f9f9;
  border: 1px solid #ccc;
`;

const Grow = styled.span`
  flex: 1;
`;

const InstanceRow = styled.div`
  display: flex;
  align-items: center;
  flex: none;
  height: 28px;
  padding: 0 7px 2px 2px;
`;

const InstanceSelect = styled.label`
  display: flex;
  align-items: center;
  flex: 1;
  height: 24px;
  margin-right: 5px;
  border-bottom: 1px solid #c8c8c8;
  select {
    flex: 1;
    padding-left: 2px;
    appearance: none;
  }
`;

const EditType = styled.button`
  display: flex;
  align-items: center;
  gap: 4px;
`;

const ScrollArea = styled.div`
  display: flex;
  flex: 1;
  min-height: 0;
  overflow: hidden;
  background: #fff;
`;

const PropTable = styled.table`
  flex: 1;
  table-layout: fixed;
  border-collapse: collapse;
  align-self: flex-start;
  color: #222;
  th, td {
    height: 19px;
    padding: 0;
    font-weight: 400;
    line-height: 18px;
    text-align: left;
    white-space: pre;
    border-bottom: 1px solid #ececec;
    border-right: 1px solid #e4e4e4;
  }
  th { padding-left: 8px; }
`;

const PropHead = styled.tr`
  && th {
    height: 21px;
    padding-left: 2px;
    font-weight: 700;
    background: #e5e5e5;
    border: 0;
  }
  div {
    display: flex;
    justify-content: space-between;
    padding-right: 2px;
  }
`;

const PropRow = styled.tr`
  color: ${(p) => (p.$dim ? "#8f8f8f" : "inherit")};
`;

const ValueText = styled.span`
  padding-left: 2px;
`;

const ValueInput = styled.input`
  display: block;
  width: 100%;
  height: 18px;
  padding-left: 5px;
  border: 1px solid #444;
`;

const EditButton = styled.button`
  display: block;
  width: calc(100% - 2px);
  height: 16px;
  margin-left: 1px;
  line-height: 14px;
  background: #f4f4f4;
  border: 1px solid #bcbcbc;
`;

const Check = styled.input.attrs({ type: "checkbox" })`
  display: block;
  appearance: none;
  width: 12px;
  height: 12px;
  margin-left: 3px;
  background: #fff;
  border: 1px solid #8a8a8a;
  &:disabled { border-color: #ccc; }
`;

const ApplyBar = styled.div`
  display: flex;
  align-items: center;
  flex: none;
  height: 25px;
  padding: 0 3px 0 2px;
  background: #f0f0f0;
  border-bottom: 1px solid #ddd;
`;

const SortBtn = styled.button`
  display: grid;
  place-items: center;
  width: 20px;
  height: 21px;
  margin-right: 3px;
  background: ${(p) => (p.$on ? "#92cfea" : "#f7f7f7")};
  border-radius: 3px;
`;

const Apply = styled.button`
  width: 66px;
  height: 19px;
  margin-left: auto;
  color: #b2b2b2;
  font-size: 12px;
  line-height: 16px;
  border: 1px solid #dadada;
  border-radius: 4px;
`;

const Track = styled.div`
  display: flex;
  flex-direction: column;
  align-items: center;
  flex: 0 0 17px;
  background: #ebebeb;
`;

const Thumb = styled.span`
  width: ${(p) => p.$w || 8}px;
  height: ${(p) => p.$h}px;
  margin: ${(p) => p.$gap}px 0 auto;
  background: #8b8b8b;
  border-radius: 4px;
`;

const VScroll = ({ h, gap = 2 }) => (
  <Track>
    <ChevronUp size={14} color="#777" />
    <Thumb $h={h} $gap={gap} />
    <ChevronDown size={14} color="#777" />
  </Track>
);

const props = [
  ["Graphics"],
  ["View Scale", "input", "1 : 1"],
  ["Scale Value    1:", "dim", "1"],
  ["Detail Level", "text", "Medium"],
  ["Parts Visibility", "text", "Show Original"],
  ["Visibility/Graphics Overrides", "edit"],
  ["Graphic Display Options", "edit"],
  ["Discipline", "text", "Coordination"],
  ["Show Hidden Lines", "text", "By Discipline"],
  ["Default Analysis Display Style", "text", "None"],
  ["Show Grids", "edit"],
  ["Sun Path", "check"],
  ["Extents"],
  ["Crop View", "check"],
  ["Crop Region Visible", "check"],
  ["Annotation Crop", "check"],
  ["Far Clip Active", "check"],
  ["Far Clip Offset", "dim", "304800.0"],
  ["Scope Box", "text", "None"],
  ["Section Box", "check"],
  ["Camera"],
  ["Rendering Settings", "edit"],
  ["Locked Orientation", "check", "dim"],
  ["Projection Mode", "text", "Orthographic"],
];

function PropValue({ name, kind, value }) {
  if (kind === "input") return <ValueInput aria-label={name} defaultValue={value} />;
  if (kind === "edit") return <EditButton aria-label={`${name} Edit...`}>Edit...</EditButton>;
  if (kind === "check") return <Check aria-label={name} disabled={value === "dim"} />;
  return <ValueText>{value}</ValueText>;
}

function SortIcon({ a, b }) {
  return (
    <Ico s={16}>
      <text x="4" y="7" fontSize="8" fontWeight="700" textAnchor="middle" fill="#3d8fc2" stroke="none">{a}</text>
      <text x="4" y="15" fontSize="8" fontWeight="700" textAnchor="middle" fill="#555" stroke="none">{b}</text>
      <path d="M12 2v11M10 11l2 3 2-3" stroke="#444" strokeWidth="1.5" />
    </Ico>
  );
}

function Properties() {
  return (
    <Palette>
      <PaletteTitle>
        Properties
        <button aria-label="Close properties"><X size={14} color="#555" /></button>
      </PaletteTitle>
      <TypeRow>
        <TypeThumb><HouseIcon s={32} /></TypeThumb>
        3D View
        <Grow />
        <Caret />
      </TypeRow>
      <InstanceRow>
        <InstanceSelect>
          <select aria-label="Instance">
            <option>3D View: 3D View 1</option>
          </select>
          <ChevronDown size={12} color="#777" />
        </InstanceSelect>
        <EditType>
          <Ico s={14}>
            <path d="M1 3l2-2h4v6H1zM9 1h6v6H9zM1 9h6v6H1z" />
            <path d="M9 9h6v6H9zM9 12h6" fill="#bcd4ee" stroke="#4470a5" />
          </Ico>
          Edit Type
        </EditType>
      </InstanceRow>
      <ScrollArea>
        <PropTable>
          <colgroup>
            <col />
            <col width="200" />
            <col width="13" />
          </colgroup>
          <tbody>
            {props.map(([name, kind, value]) =>
              kind ? (
                <PropRow key={name} $dim={kind === "dim" || value === "dim"}>
                  <th scope="row">{name}</th>
                  <td><PropValue name={name} kind={kind} value={value} /></td>
                  <td />
                </PropRow>
              ) : (
                <PropHead key={name}>
                  <th colSpan="3"><div>{name}<ChevronsUp size={11} color="#333" /></div></th>
                </PropHead>
              )
            )}
          </tbody>
        </PropTable>
        <VScroll h={242} />
      </ScrollArea>
      <ApplyBar>
        <SortBtn $on aria-label="Group by category">
          <Ico s={16}>
            <path d="M1 4h7M1 8h7M1 12h7" stroke="#3f7795" />
            <path d="M12 2v12M10 4l2-2 2 2M10 12l2 2 2-2" stroke="#222" />
          </Ico>
        </SortBtn>
        <SortBtn aria-label="Sort ascending"><SortIcon a="A" b="Z" /></SortBtn>
        <SortBtn aria-label="Sort descending"><SortIcon a="Z" b="A" /></SortBtn>
        <Apply disabled>Apply</Apply>
      </ApplyBar>
    </Palette>
  );
}

const BrowserTabs = styled.div`
  display: flex;
  flex: none;
  height: 23px;
  background: #c9c9c9;
`;

const BrowserTab = styled.button`
  display: grid;
  place-items: center;
  width: 24px;
  background: ${(p) => (p.$on ? "#fff" : "none")};
`;

const SearchBox = styled.label`
  display: flex;
  align-items: center;
  flex: none;
  gap: 8px;
  height: 26px;
  margin: 8px 8px 8px 9px;
  padding-left: 7px;
  border: 1px solid #e0e0e0;
  input {
    flex: 1;
    outline: 0;
  }
  input::placeholder { color: #999; opacity: 1; }
`;

const BrowserBody = styled(Palette)`
  background: #fff;
`;

const Tree = styled.ul`
  flex: 1;
  margin: 0;
  padding: 0 0 0 1px;
  list-style: none;
  color: #222;
  font-family: ${wideFont};
`;

const TreeRow = styled.li`
  display: flex;
  align-items: center;
  height: 20px;
  white-space: nowrap;
  background: ${(p) => (p.$on ? "#f0f0f0" : "none")};
`;

// dotted guide running down under a parent, with a tick towards the row
const Guide = styled.span`
  align-self: stretch;
  flex: 0 0 ${(p) => (p.$leaf ? 37 : 16)}px;
  background:
    linear-gradient(#bdbdbd 50%, transparent 50%) 8px 0 / 1px 4px repeat-y,
    linear-gradient(#cfcfcf, #cfcfcf) 8px 10px / ${(p) => (p.$tick ? (p.$leaf ? 24 : 8) : 0)}px 1px no-repeat;
  ${(p) => p.$last && css`
    background:
      linear-gradient(#c8c8c8, #c8c8c8) 8px 0 / 1px 10px no-repeat,
      linear-gradient(#cfcfcf, #cfcfcf) 8px 10px / ${p.$leaf ? 24 : 8}px 1px no-repeat;
  `}
`;

const Toggle = styled.button`
  display: grid;
  place-items: center;
  flex: 0 0 16px;
  margin-right: 5px;
`;

const RootIcon = styled.span`
  margin-right: 4px;
`;

// level, kind (- open, + closed, . leaf), text, last child of its parent
const tree = [
  [1, "-", "Architectural"],
  [2, "-", "Floor Plans (Architectural Plan)"],
  [3, ".", "L1 - Architectural"],
  [3, ".", "L2 - Architectural", true],
  [2, "+", "Floor Plans (Site Plan)"],
  [2, "+", "Ceiling Plans (Architectural Ceiling Plan)"],
  [2, "-", "Elevations (Building Elevation)"],
  [3, ".", "East - Architectural"],
  [3, ".", "North - Architectural"],
  [3, ".", "South - Architectural"],
  [3, ".", "West - Architectural", true],
  [2, "+", "Sections (Working Section)", true],
  [1, "-", "Coordination"],
  [2, "+", "Floor Plans (Working Plan)"],
  [2, "+", "3D Views", true],
  [1, "-", "Electrical"],
  [2, "+", "Floor Plans (Lighting Plan)"],
  [2, "+", "Floor Plans (Power Plan)"],
  [2, "+", "Ceiling Plans (Electrical Ceiling Plan)", true],
  [1, "-", "Mechanical"],
  [2, "+", "Floor Plans (Mechanical Plan)"],
  [2, "+", "Ceiling Plans (Mechanical Ceiling Plan)", true],
  [1, "-", "Plumbing"],
  [2, "+", "Floor Plans (Plumbing Plan)", true],
  [1, "-", "Structural"],
];

const PlusMinus = ({ plus }) => (
  <svg width="9" height="9" viewBox="0 0 9 9">
    <path d={plus ? "M1 4.5h7M4.5 1v7" : "M0 4.5h9"} stroke="#777" strokeWidth="2" />
  </svg>
);

function ProjectBrowser() {
  const [picked, setPicked] = useState("East - Architectural");
  return (
    <BrowserBody>
      <PaletteTitle>
        Project Browser - Project3
        <button aria-label="Close browser"><X size={14} color="#555" /></button>
      </PaletteTitle>
      <BrowserTabs>
        <BrowserTab $on aria-label="All"><House size={17} color="#555" strokeWidth={1.7} /></BrowserTab>
        <BrowserTab aria-label="Views"><FramedCube /></BrowserTab>
        <BrowserTab aria-label="Legends">
          <Ico>
            <path d="M1 2h14v12H1zM1 3h14" />
            <path d="M3 6h3v2H3zM3 10h3v2H3zM8 7h5M8 11h5" />
          </Ico>
        </BrowserTab>
        <BrowserTab aria-label="Schedules"><Table size={16} color="#666" strokeWidth={1.8} /></BrowserTab>
        <BrowserTab aria-label="Sheets">
          <Ico>
            <path d="M1 3h7l6 6v4h-3L3 6M6 3l6 8M1 11h5" />
          </Ico>
        </BrowserTab>
        <BrowserTab aria-label="Families">
          <Ico>
            <path d="M1 2h14v12H1zM7 2v6H1M11 2v9H7" />
          </Ico>
        </BrowserTab>
        <BrowserTab aria-label="Groups">
          <Ico>
            <path d="M4 1H1v14h3M12 1h3v14h-3" />
            <circle cx="7" cy="6" r="3" />
            <path d="M6 8h6v5H6z" fill="#ddd" />
          </Ico>
        </BrowserTab>
        <BrowserTab aria-label="Links"><Link2 size={17} color="#e08a4c" transform="rotate(-40)" /></BrowserTab>
      </BrowserTabs>
      <SearchBox>
        <Search size={17} color="#777" />
        <input placeholder="Search" aria-label="Search browser" />
      </SearchBox>
      <ScrollArea>
        <Tree>
          <TreeRow>
            <Toggle aria-label="Collapse views"><PlusMinus /></Toggle>
            <RootIcon><FramedCube s={16} /></RootIcon>
            Views (Discipline)
          </TreeRow>
          {tree.map(([level, kind, text, last]) => (
            <TreeRow key={text} $on={text === picked} onClick={() => setPicked(text)}>
              {Array.from({ length: level }, (_, i) => (
                <Guide
                  key={i}
                  $tick={i === level - 1}
                  $leaf={kind === "." && i === level - 1}
                  $last={last && i === level - 1}
                />
              ))}
              {kind !== "." && (
                <Toggle aria-label={`Toggle ${text}`}><PlusMinus plus={kind === "+"} /></Toggle>
              )}
              {text}
            </TreeRow>
          ))}
        </Tree>
        <VScroll h={213} gap={8} />
      </ScrollArea>
    </BrowserBody>
  );
}

/* ---------- drawing area ---------- */

const ViewColumn = styled.div`
  display: flex;
  flex-direction: column;
  flex: 1;
  min-width: 0;
`;

const DocTabs = styled.div`
  display: flex;
  flex: none;
  height: 21px;
  background: #cbcbcb;
  border-bottom: 1px solid #dcdcdc;
  font-family: ${wideFont};
`;

const DocTab = styled.button`
  display: flex;
  align-items: center;
  gap: 8px;
  width: ${(p) => (p.$on ? 125 : 141)}px;
  padding: 0 0 0 4px;
  font-weight: ${(p) => (p.$on ? 700 : 400)};
  color: #444;
  background: ${(p) => (p.$on ? "#fff" : "#cfcfcf")};
`;

const DocMenu = styled(Tool)`
  width: 16px;
  margin-left: auto;
`;

const CanvasRow = styled.div`
  display: flex;
  flex: 1;
  min-height: 0;
`;

const Canvas = styled.div`
  position: relative;
  flex: 1;
  overflow: hidden;
  background: #fff;
`;

const ModelSvg = styled.svg`
  position: absolute;
  left: 763px;
  top: 175px;
  overflow: visible;
`;

const ViewToggle = styled.input.attrs({ type: "checkbox" })`
  position: absolute;
  top: 25px;
  right: 159px;
  appearance: none;
  width: 36px;
  height: 19px;
  border-radius: 10px;
  background: radial-gradient(circle at 10px 10px, #fff 6px, #9d9d9d 7px);
`;

const CubeSvg = styled.svg`
  position: absolute;
  top: 41px;
  right: 21px;
`;

const NavBar = styled.div`
  position: absolute;
  top: 139px;
  right: 1px;
  display: flex;
  flex-direction: column;
  align-items: center;
  justify-content: space-between;
  width: 27px;
  height: 94px;
  padding: 2px;
  background: #f6f6f6;
  border: 1px solid #aaa;
  border-radius: 4px;
`;

const NavDot = styled.button`
  align-self: flex-end;
  width: 7px;
  height: 7px;
  border: 2px solid #b0b0b0;
  border-radius: 50%;
`;

const NavLine = styled.span`
  width: 20px;
  height: 1px;
  background: #bbb;
`;

// repeatable noise so the scan looks the same on every render
function speckle(seed, n, x, y, w, h, size = 6) {
  let s = seed * 7919;
  const next = () => {
    s = (s * 16807) % 2147483647;
    return s / 2147483647;
  };
  next();
  let d = "";
  for (let i = 0; i < n; i++) {
    const px = Math.round(x + next() * w);
    const py = Math.round(y + next() * h);
    const a = Math.round(2 + next() * size);
    const b = Math.round(2 + next() * size);
    d += `M${px} ${py}h${a}v${b}h${-a}z`;
  }
  return d;
}

const GRAY = "#787878";
const YEL = "#e9ff70";
const GRN = "#0bd37e";
const POST = "#4fa76a";
const BLU = "#2506c0";
const GOLD = "#ffe32e";

const posts = [
  [364, 1180, 13, 128], [532, 1180, 12, 128], [549, 1300, 13, 105], [680, 1372, 16, 108],
  [804, 1318, 14, 96], [1047, 1180, 17, 100], [1171, 1112, 17, 104], [706, 1275, 11, 95],
  [1197, 1008, 12, 102], [781, 1180, 8, 90], [905, 1060, 6, 146], [632, 1205, 16, 84],
  [925, 1240, 15, 48], [457, 1112, 10, 74], [1022, 1060, 14, 78], [625, 935, 10, 70], [690, 935, 9, 66],
];

const vessels = [
  [670, 1205, 762, 1252, 17], [745, 1145, 850, 1197, 20], [800, 1128, 888, 1177, 15],
  [862, 1092, 955, 1140, 18], [972, 1038, 1068, 1086, 13], [1056, 1030, 1106, 1066, 14],
  [715, 1380, 768, 1404, 11],
];

// noise under the main steel
const backSpecks = [
  [53, 34, 400, 1290, 180, 120, POST, 4], [41, 30, 640, 1290, 110, 100, POST, 5],
  [36, 50, 850, 1240, 90, 140, POST, 6], [54, 26, 1090, 1240, 35, 45, GRN, 7],
  [47, 40, 380, 1170, 150, 50, YEL, 5], [48, 40, 600, 1100, 160, 70, YEL, 5],
  [49, 50, 700, 1000, 240, 50, YEL, 5], [60, 20, 730, 1130, 160, 60, "#f6ffc0", 4],
];

const specks = [
  [11, 30, 390, 620, 16, 90, BLU, 7], [12, 40, 350, 960, 44, 220, BLU, 7], [13, 40, 352, 1060, 45, 120, GRAY, 5],
  [14, 40, 716, 930, 60, 60, BLU, 8], [15, 30, 525, 950, 70, 60, BLU, 7], [16, 90, 525, 1010, 80, 90, GRAY, 16],
  [17, 60, 480, 1100, 115, 110, BLU, 9], [18, 60, 480, 1090, 115, 110, GRN, 9], [61, 40, 480, 1100, 115, 110, "#143c36", 7],
  [19, 50, 295, 1190, 80, 45, GRN, 8], [20, 30, 300, 1190, 70, 50, BLU, 7], [21, 26, 305, 1220, 20, 60, "#ffa400", 9],
  [22, 60, 825, 960, 100, 35, BLU, 8], [23, 70, 850, 925, 100, 40, GRN, 9], [24, 40, 970, 900, 65, 30, BLU, 8],
  [25, 60, 1005, 990, 100, 70, GRN, 8], [26, 50, 1010, 1010, 110, 80, BLU, 7],
  [27, 60, 600, 1010, 70, 30, GRN, 10], [28, 30, 620, 1020, 50, 26, BLU, 8],
  [29, 60, 722, 80, 40, 160, GRN, 7], [30, 30, 722, 160, 33, 90, "#fff", 6], [31, 30, 722, 300, 34, 600, "#a9b068", 4],
  [32, 24, 540, 400, 42, 560, "#a9b068", 4], [33, 40, 745, 70, 22, 20, "#3d1030", 8], [34, 24, 558, 268, 16, 20, BLU, 8],
  [35, 24, 372, 592, 22, 34, BLU, 8], [37, 26, 590, 1355, 40, 60, "#fff", 7],
  [38, 20, 600, 1372, 34, 20, BLU, 10], [39, 20, 592, 1384, 26, 10, "#5c1030", 9], [40, 14, 590, 1395, 20, 24, GRN, 8],
  [42, 20, 725, 1375, 45, 30, BLU, 7], [62, 16, 735, 1370, 40, 36, "#fff", 6], [43, 70, 235, 1225, 65, 75, GRAY, 14],
  [45, 60, 1205, 1010, 24, 80, GRAY, 10], [46, 8, 1228, 1040, 22, 24, "#d9a0a0", 4],
  [50, 40, 650, 1200, 50, 50, GRN, 9], [51, 30, 830, 1300, 60, 22, "#7660c0", 7], [52, 24, 650, 890, 40, 40, BLU, 9],
  [55, 10, 524, 570, 10, 100, BLU, 6], [56, 18, 396, 640, 12, 500, "#17513a", 5], [57, 40, 830, 1080, 140, 70, BLU, 6],
  [58, 20, 690, 548, 30, 26, BLU, 6], [59, 40, 900, 905, 70, 50, GRAY, 9], [63, 40, 385, 1240, 30, 30, "#4030a0", 6],
  [64, 16, 1145, 1165, 20, 30, BLU, 8], [65, 30, 690, 560, 44, 56, GRAY, 10], [66, 30, 690, 690, 44, 110, GRAY, 9],
  [67, 26, 500, 780, 38, 50, GRAY, 9], [68, 20, 340, 900, 15, 40, GRAY, 8],
];

function Ladder({ x, y, w, h }) {
  return (
    <g stroke={GRAY} fill="none">
      <rect x={x} y={y} width={w} height={h} fill={GRAY} stroke="none" />
      <path d={`M${x + w * 0.4} ${y + 10}v${h - 16}`} stroke="#fff" strokeWidth="4" strokeDasharray="4 9" />
      <path d={`M${x + w * 0.75} ${y + 6}v${h - 16}`} stroke="#ddd" strokeWidth="2" strokeDasharray="3 12" />
      <path d={`M${x} ${y}v${h}`} strokeWidth="5" strokeDasharray="9 4" />
    </g>
  );
}

function PlantModel() {
  return (
    <ModelSvg width="600" height="640" viewBox="0 0 1568 1568" preserveAspectRatio="none" role="img" aria-label="Point cloud of a plant">
      <g fill="none" stroke="#333" strokeWidth="2.4">
        <path d="M30 973L622 655 2041 1419M30 1090L615 773 2036 1539" />
      </g>
      <path
        fill={GRAY}
        d="M235 1218L262 1228 305 1242 383 1184 514 1111 610 1045 819 960 930 912 1037 886 1093 896 1097 931 1106 960 1222 1030 1228 1086 1196 1116 1188 1176 1276 1226 700 1535 310 1322 290 1300 262 1280 240 1268z"
      />
      <path fill="#fff" d="M1112 975l80 32v26l-84-40z" />
      {backSpecks.map(([seed, n, x, y, w, h, fill, size]) => (
        <path key={seed} d={speckle(seed, n, x, y, w, h, size)} fill={fill} />
      ))}
      <g stroke={GRAY} strokeWidth="4" fill="none">
        <path d="M1090 1008l110 44M1090 1024l110 44M1090 992l126 56M1120 1000v40M1150 1010v40M1180 1022v40" />
        <path d="M1030 870l64 28v34M1030 882l64 28M1030 870v22M1060 880v30" />
        <path d="M683 105l52-28M683 105v22l45 22M770 85l30 20-28 15M683 127l52-20M726 56h38M744 58v20M690 250l45-18M690 265l32 15M774 235l14 15-14 15M692 250v16" />
        <path d="M490 297l60-32 55 22-30 15zM490 297l40 20M505 600l35-22M508 600l30 20M505 525l40-15M520 282l14 16" />
        <path d="M305 612l70-34 48 24-42 22zM305 615l40 16M325 655v25h20M322 745l25-8v25z" />
        <ellipse cx="512" cy="437" rx="9" ry="17" />
        <path d="M505 705c10-30 90-30 100-15M570 722l36-30" />
        <path d="M700 925c20-26 40-26 50 0M690 940c20-30 45-30 55-4M780 890c15 15 22 50 20 75M790 885c-30-10-40 60-20 80" />
        <path d="M692 815c0-18 30-18 30 0v30h-30zM692 830h30" />
        <path d="M900 884h36M918 884v30" />
        <path d="M320 1100h16v20h-16zM405 965c20 5 22 55 10 62" />
      </g>
      <g stroke="#e0dc4a" strokeWidth="4" fill="none">
        <path d="M322 830c10-14 24-8 30 6s-20 20-28 4zM325 885h30M329 868l-6 16M322 650c12-8 16 2 14 12M683 127l14 8M405 602l16 4M580 285h24M318 1116l14 6" />
      </g>
      <path fill={GRAY} d="M672 410l33-18 32 4v60l-22-16zM688 585l47-8v46l-47-14zM688 672l47 8v120l-45-24zM778 565c18 5 20 50 0 54zM500 800l18-18 25 10v40l-35-8zM503 517l34 8v22zM325 910l30 8v28zM405 975l18 25-8 28-10-4zM772 895l28 40-28 40z" />

      {/* left tower */}
      <Ladder x={336} y={600} w={25} h={254} />
      <path fill={YEL} d="M362 640h30v500l5 60-46-4 5-60 6-200z" />
      <path fill={GRN} d="M389 628h14v40h5v500l-5 6-8-60-6-150z" />
      <path d="M398 640v500" stroke="#17a566" strokeWidth="2" />

      {/* middle tower */}
      <Ladder x={521} y={290} w={26} h={258} />
      <Ladder x={584} y={470} w={12} h={170} />
      <Ladder x={517} y={700} w={26} h={230} />
      <path fill={YEL} d="M546 300l37-5v760l10 40h-66l8-40V545h11z" />
      <path fill={GRN} d="M555 305l27-12v52l-20-4zM584 560h8v140h-8zM524 950h6v120h-6z" />
      <path d="M535 818q25 14 50-4M535 832q25 14 50-4" stroke={GRAY} strokeWidth="4" fill="none" />
      <path d="M537 750h46M537 535h46M557 628h16M557 915h20M557 355h18" stroke={GRAY} strokeWidth="4" fill="none" strokeDasharray="6 5" />

      {/* right tower */}
      <Ladder x={708} y={228} w={27} h={142} />
      <Ladder x={708} y={612} w={25} h={70} />
      <path d="M777 80v160M776 420v80" stroke={GRAY} strokeWidth="6" />
      <path fill={YEL} d="M721 90l36-12v930l-34-20z" />
      <path fill={YEL} d="M733 85h30v60h-30z" />
      <path fill={GRN} d="M755 130l14-55 3 110h5v650l-12 130-12-4z" />
      <path d="M767 250v600" stroke="#fff" strokeWidth="2" strokeDasharray="26 12" />

      {/* lower steel */}
      {posts.map(([x, y, w, h]) => (
        <g key={`${x}-${y}`}>
          <rect x={x} y={y} width={w} height={h} fill={POST} />
          <rect x={x - 3} y={y + h - 4} width={w + 6} height="7" fill="#3a7a4e" />
        </g>
      ))}
      {vessels.map(([x1, y1, x2, y2, r]) => (
        <g key={`${x1}-${y1}`}>
          <path d={`M${x1} ${y1}L${x2} ${y2}`} stroke={YEL} strokeWidth={r * 1.8} />
          <ellipse cx={x2} cy={y2} rx={r * 0.9} ry={r} fill={YEL} stroke={BLU} strokeWidth="8" strokeDasharray="18 4" />
        </g>
      ))}
      <g fill="none" stroke={GRN}>
        <path d="M592 1202L1115 945" strokeWidth="25" />
        <path d="M770 862l155 62M405 1075l140 66" strokeWidth="8" />
        <path d="M850 958l80-35M640 1150v130M600 1010l50 24" strokeWidth="12" />
        <path d="M425 1272c16 20 14 50 4 70z" fill={GRN} strokeWidth="4" />
        <path d="M915 905v40M850 900v40M660 920v90" strokeWidth="7" />
        <path d="M1090 850h14l-6 12h-8zM1090 862v50" strokeWidth="4" />
      </g>
      <g fill="none" stroke={GOLD}>
        <path d="M650 1245l505-256" strokeWidth="8" />
        <path d="M560 1195l148 80M700 1375l120-58M1095 955l112 50" strokeWidth="6" />
        <path d="M380 1195l130-68M600 1085l200-90M570 1190L1100 925M680 1100l70-34M740 1022l200-88" strokeWidth="4" strokeDasharray="22 7" />
        <path d="M650 1210h130M660 1200l20 50M740 1150h100M820 1090h80l40 30M890 1110v-50M940 1030l30 40M1040 985h110M985 1020l40 30" strokeWidth="5" />
        <path d="M625 935h70l-20-14h-40zM630 1005h62l-22-16" strokeWidth="7" />
        <path d="M540 1192l20-6 24 12-14 14z" fill={GOLD} strokeWidth="4" />
      </g>
      <path fill={YEL} d="M1002 1215l50-25q38 2 36 50-40 12-60-14zM1085 1165l34-14q34 6 36 40l-20 8zM755 1345l50-27v26l-40 14z" />
      <circle cx="955" cy="1254" r="15" fill={YEL} />
      <rect x="1048" y="1180" width="15" height="98" fill={POST} />
      <g fill={BLU}>
        <circle cx="1080" cy="1228" r="12" />
        <circle cx="961" cy="1256" r="10" />
        <circle cx="902" cy="1312" r="10" />
        <circle cx="378" cy="1086" r="13" />
        <circle cx="571" cy="1006" r="11" />
        <circle cx="1112" cy="946" r="10" />
        <circle cx="605" cy="1217" r="10" />
        <circle cx="494" cy="1192" r="12" />
        <circle cx="616" cy="1386" r="11" />
        <path d="M655 885h16v20h8v10h-30v-10h6zM748 862h16v22h-16zM590 1212h20v12h-20z" />
      </g>
      <path fill={YEL} d="M652 907h24v10h-24z" />
      <g fill="none" stroke="#a46ce0">
        <path d="M440 1332l38-62q10-8 20 0l46 92" strokeWidth="9" />
        <path d="M325 1120l30 25M330 940l22 20M510 598l28 28M694 850l24 18M1186 1008l10 22M905 1280l20-22" strokeWidth="5" />
      </g>
      <path fill="#fff" d="M963 1345l20-4 6-8 2 12-10 6-18 2zM524 1415l10-6 4 10zM540 1350l8 4v18zM700 1406l20-3 4 8-22 2z" />
      {specks.map(([seed, n, x, y, w, h, fill, size]) => (
        <path key={seed} d={speckle(seed, n, x, y, w, h, size)} fill={fill} />
      ))}
    </ModelSvg>
  );
}

function ViewCube() {
  return (
    <CubeSvg width="106" height="92" viewBox="2416 235 106 92" role="img" aria-label="View cube">
      <defs>
        <radialGradient id="cubeShadow">
          <stop offset="0.4" stopColor="#000" stopOpacity="0.35" />
          <stop offset="1" stopColor="#000" stopOpacity="0" />
        </radialGradient>
      </defs>
      <ellipse cx="2470" cy="290" rx="46" ry="28" fill="none" stroke="#f4f4f4" strokeWidth="11" />
      <ellipse cx="2470" cy="290" rx="51" ry="33" fill="none" stroke="#c3c3c3" strokeDasharray="4 1" />
      <ellipse cx="2470" cy="290" rx="40" ry="23" fill="none" stroke="#cdcdcd" />
      <ellipse cx="2470" cy="290" rx="34" ry="17" fill="url(#cubeShadow)" />
      <g fill="#b5b5b5" fontSize="11" fontWeight="700" textAnchor="middle">
        <text x="2438" y="271" transform="rotate(-30 2438 267)">W</text>
        <text x="2500" y="271" transform="rotate(30 2500 267)">N</text>
        <text x="2433" y="313" transform="rotate(50 2433 309)">S</text>
        <text x="2505" y="313" transform="rotate(-50 2505 309)">E</text>
      </g>
      <g stroke="#8d8d8d" strokeWidth="1">
        <path d="M2442 253l28-14 28 13-28 16z" fill="#f4f4f4" />
        <path d="M2442 253l28 15v33l-27-16z" fill="#eee" />
        <path d="M2498 252l-28 16v33l27-16z" fill="#e9e9e9" />
      </g>
      <g fill="#999" fontSize="7" fontWeight="700" textAnchor="middle">
        <text x="2470" y="255" transform="rotate(22 2470 253)">TOP</text>
        <text x="2456" y="280" transform="rotate(27 2456 278)">FRONT</text>
        <text x="2484" y="280" transform="rotate(-27 2484 278)">RIGHT</text>
      </g>
    </CubeSvg>
  );
}

/* ---------- classification window ---------- */

const Dialog = styled.section`
  position: absolute;
  left: 214px;
  top: 91px;
  display: flex;
  flex-direction: column;
  width: 561px;
  padding: 0 3px 2px;
  background: #f8f0ed;
  border: 1px solid #9f9f9f;
  border-radius: 7px 7px 4px 4px;
  box-shadow: 0 18px 40px rgba(0, 0, 0, 0.42), 0 0 18px rgba(0, 0, 0, 0.12);
`;

const DialogTitle = styled.header`
  display: flex;
  align-items: center;
  gap: 5px;
  height: 33px;
  padding: 0 6px 3px 4px;
  color: #111;
  button { margin-left: auto; }
`;

const DialogBody = styled.div`
  display: flex;
  justify-content: space-between;
  padding-left: 3px;
  background: #fff;
  border: 1px solid #9a9a9a;
`;

const ClassTable = styled.table`
  width: 253px;
  table-layout: fixed;
  border-collapse: collapse;
  font-family: "Liberation Sans", Arial, sans-serif;
  th {
    height: 21px;
    padding: 0 0 0 5px;
    font-family: "Open Sans", "Noto Sans", sans-serif;
    font-weight: 400;
    text-align: left;
    border-right: 1px solid #e6e6e6;
  }
  th:first-child, td:first-child { padding-left: 1px; }
  td {
    height: 16px;
    padding: 0 0 0 5px;
    line-height: 16px;
    white-space: nowrap;
  }
`;

const BlueCell = styled.td`
  color: #c9ecff;
  background: #0078d7;
`;

const ShowBox = styled.input.attrs({ type: "checkbox" })`
  display: block;
  appearance: none;
  width: 14px;
  height: 14px;
  margin-left: 4px;
  border: 1px solid #ebebeb;
  border-top-color: #8a8a8a;
  border-left-color: #8a8a8a;
`;

const Swatch = styled.button`
  display: block;
  width: 31px;
  height: 14px;
  margin-left: -4px;
  background: ${(p) => p.$c};
  border: 1px solid rgba(0, 0, 0, 0.25);
  border-bottom-color: #333;
  border-right-color: #333;
`;

const classes = [
  ["Created, never c...", "#444"], ["Unclassified", "#777"], ["Ground", "#663300"],
  ["Low Vegetation", "#009a00"], ["Medium Vegetat...", "#007300"], ["High Vegetation", "#004400"],
  ["Building", "#ff0000"], ["Low Point (Noise)", "#bb14ff"], ["Reserved", "#ff00ff"],
  ["Water", "#0000b8"], ["Rail", "#ff9e7c"], ["Road Surface", "#9f9fa3"], ["Reserved", "#ff00ff"],
  ["Wire - Guard", "#808000"], ["Wire - Conductor", "#ffff00"], ["Transmission T...", "#440000"],
  ["Wire-structure C...", "#ff8000"], ["Bridge Deck", "#940000"], ["High Noise", "#00005c"],
  ["Overhead Struct...", "#cf0068"], ["Ignored Ground", "#6a4018"], ["Snow", "#ffffff"],
  ["Temporal Exclu...", "#b00000"], ["Reserved", "#ea1bdf"], ["Reserved", "#b8089f"],
  ["Reserved", "#8aa6e8"], ["Reserved", "#369558"], ["Reserved", "#d15f7f"], ["Reserved", "#239880"],
  ["Reserved", "#4c779e"], ["Reserved", "#1a423a"], ["Reserved", "#4f9bff"], ["Reserved", "#ceff2e"],
  ["Reserved", "#e8a39a"], ["Reserved", "#b69544"], ["Reserved", "#45c3bd"], ["Reserved", "#a7a5a7"],
  ["Reserved", "#3bc83b"], ["Reserved", "#c48b19"], ["Reserved", "#3296cb"], ["Reserved", "#c0b0e2"],
  ["Reserved", "#101844"], ["Reserved", "#1470b8"], ["Reserved", "#05ed42"], ["Reserved", "#839a8e"],
  ["Reserved", "#82b724"],
];

function Classifications() {
  return (
    <Dialog aria-label="Point Cloud Classifications">
      <DialogTitle>
        <Ico>
          <rect width="16" height="16" rx="3" fill="#70a9d0" stroke="none" />
          <path d="M11 3L7 8l4 5" fill="none" stroke="#fff" strokeWidth="3" />
        </Ico>
        Point Cloud Classifications
        <button aria-label="Close window"><X size={15} color="#222" strokeWidth={1.6} /></button>
      </DialogTitle>
      <DialogBody>
        <ClassTable>
          <colgroup>
            <col width="61" />
            <col width="32" />
            <col width="96" />
            <col width="32" />
            <col width="32" />
          </colgroup>
          <thead>
            <tr>
              <th>Model</th>
              <th>Ind...</th>
              <th>Category</th>
              <th>Sh...</th>
              <th>Co...</th>
            </tr>
          </thead>
          <tbody>
            {classes.map(([name, color], i) => (
              <tr key={i}>
                <BlueCell>Plant 2.0</BlueCell>
                <BlueCell>{i}</BlueCell>
                <BlueCell>{name}</BlueCell>
                <td><ShowBox aria-label={`Show class ${i}`} /></td>
                <td><Swatch $c={color} aria-label={`Colour of class ${i}`} /></td>
              </tr>
            ))}
          </tbody>
        </ClassTable>
        <Track>
          <Thumb $w={2} $h={130} $gap={18} />
        </Track>
      </DialogBody>
    </Dialog>
  );
}

/* ---------- bottom bars ---------- */

const ViewBar = styled.div`
  display: flex;
  align-items: center;
  flex: none;
  height: 18px;
  padding-left: 28px;
  background: #f3f3f3;
  border-bottom: 1px solid #d6d6d6;
`;

const Scale = styled.span`
  width: 46px;
  white-space: pre;
`;

const HScroll = styled.div`
  display: flex;
  align-items: center;
  flex: 1;
  align-self: stretch;
  background: #e9e9e9;
`;

const HThumb = styled.span`
  width: 17px;
  height: 8px;
  margin: 0 auto;
  background: #8b8b8b;
  border-radius: 4px;
`;

const StatusBar = styled.footer`
  display: grid;
  grid-template-columns: minmax(0, 1569fr) minmax(0, 991fr);
  align-items: center;
  flex: none;
  height: 28px;
  padding: 2px 0 0 2px;
  background: #f4f4f4;
  border-bottom: 2px solid #c2c2c2;
  font-family: ${wideFont};
`;

const StatusTools = styled.div`
  display: flex;
  align-items: center;
  height: 24px;
  color: #888;
`;

const WorksetBox = styled.label`
  display: flex;
  align-items: center;
  justify-content: flex-end;
  width: ${(p) => p.$w}px;
  height: 23px;
  margin-right: ${(p) => p.$gap}px;
  border-bottom: 1px solid #e4e4e4;
  select {
    flex: 1;
    appearance: none;
    color: #9a9a9a;
    opacity: 1;
  }
`;

const Count = styled.span`
  width: 32px;
`;

const Picks = styled.div`
  display: flex;
  align-items: center;
  margin-left: auto;
  padding-right: 60px;
`;

const Taskbar = styled.footer`
  display: flex;
  align-items: center;
  flex: none;
  height: 47px;
  padding: 0 20px 2px 16px;
  background: #f1f1f1;
`;

const StartBtn = styled.button`
  display: grid;
  place-items: center;
  width: 34px;
  margin-right: 8px;
`;

const TaskSearch = styled.label`
  display: flex;
  align-items: center;
  gap: 9px;
  width: 219px;
  height: 31px;
  padding-left: 10px;
  margin-right: 2px;
  background: #fbfbfb;
  border: 1px solid #e2e2e2;
  border-radius: 16px;
  font-size: 13px;
  input { width: 150px; outline: 0; }
  input::placeholder { color: #555; opacity: 1; }
`;

const TaskBtn = styled.button`
  display: flex;
  flex-direction: column;
  align-items: center;
  justify-content: space-between;
  position: relative;
  width: 38px;
  height: 39px;
  margin: 0 3px;
  padding: 7px 0 1px;
  border-radius: 4px;
  background: ${(p) => ({ alert: "#e9a5a1", active: "#fdfdfd" }[p.$state] || "none")};
`;

const Run = styled.span`
  width: ${(p) => ({ alert: 32, active: 16, idle: 0 }[p.$state] ?? 6)}px;
  height: 3px;
  border-radius: 2px;
  background: ${(p) => ({ alert: "#bd2c21", active: "#1a6fb5" }[p.$state] || "#8a8a8a")};
`;

const Badge = styled.span`
  position: absolute;
  top: 2px;
  right: 3px;
  width: 16px;
  height: 16px;
  font-size: 11px;
  line-height: 15px;
  color: #fff;
  background: #c42b1c;
  border-radius: 50%;
`;

const Clock = styled.div`
  margin-left: auto;
  line-height: 16px;
  text-align: right;
  color: #333;
`;

const AppTile = ({ fill, edge, letter, sub, band }) => (
  <Ico s={26} v={26}>
    <path d="M2 1h19l3 3v21H5l-3-3z" fill={edge} stroke="none" />
    <path d="M4 1h17v17H4z" fill={fill} stroke="none" />
    {sub && <path d="M5 17h19v8H5z" fill={band} stroke="none" />}
    <text x="13" y="14" fontSize="13" fontWeight="700" textAnchor="middle" fill="#fff" stroke="none">{letter}</text>
    <text x="14" y="24" fontSize="6" fontWeight="700" textAnchor="middle" fill="#fff" stroke="none">{sub}</text>
  </Ico>
);

const SnagTile = ({ fill }) => (
  <Ico s={26} v={26}>
    <rect x="1" y="1" width="24" height="24" rx="2" fill={fill} stroke="none" />
    <path d="M19 6H9q-2 0-2 2v3q0 2 2 2h8q2 0 2 2v3q0 2-2 2H7" stroke="#fff" strokeWidth="3.6" />
  </Ico>
);

const taskApps = [
  ["Task view", "idle",
    <Ico s={26} v={26}>
      <path d="M9 5h15v14H9z" fill="#e3e3e3" stroke="none" />
      <path d="M3 8h14v14H3z" fill="#333" stroke="none" />
      <path d="M9 8h8v8H9z" fill="#8d8d8d" stroke="none" />
    </Ico>],
  ["Explorer", "run",
    <Ico s={26} v={26}>
      <path d="M1 3h9l3 3h12v18H1z" fill="#e0a126" stroke="none" />
      <path d="M1 8h24v15H1z" fill="#ffd45e" stroke="none" />
      <path d="M4 16h18v8H4z" fill="#1877b8" stroke="none" />
      <path d="M7 20h12v4H7z" fill="#5aa6d8" stroke="none" />
    </Ico>],
  ["Firefox", "run",
    <Ico s={26} v={26}>
      <circle cx="13" cy="14" r="11" fill="#ff6a2b" stroke="none" />
      <path d="M16 1c7 4 10 9 8 16-2 4-6 7-11 7 8-5 8-12 3-23z" fill="#ffcb2e" stroke="none" />
      <path d="M3 6c4 1 5-1 8 1l-5 8z" fill="#ff8f30" stroke="none" />
      <circle cx="13" cy="14" r="6" fill="#7b3fd0" stroke="none" />
      <path d="M4 13c5-3 8 0 11 2-3 4-9 4-11-2z" fill="#ff9d2e" stroke="none" />
    </Ico>],
  ["Teams", "alert",
    <Ico s={26} v={26}>
      <circle cx="14" cy="6" r="4.5" fill="#6a70e0" stroke="none" />
      <circle cx="21" cy="9" r="3" fill="#7b83eb" stroke="none" />
      <path d="M9 11h16v8q-3 7-9 6-7-1-7-8z" fill="#6264d9" stroke="none" />
      <rect x="1" y="10" width="14" height="14" rx="2" fill="#4146b8" stroke="none" />
      <text x="8" y="21" fontSize="10" fontWeight="700" textAnchor="middle" fill="#fff" stroke="none">T</text>
    </Ico>],
  ["Outlook", "run",
    <Ico s={26} v={26}>
      <path d="M4 9l10-8 11 8v13l-3 2H8l-4-2z" fill="#1466c8" stroke="none" />
      <path d="M4 13L16 5l9 6-13 10z" fill="#4ba3f0" stroke="none" />
      <path d="M25 11v11l-3 2H11z" fill="#2fc0f5" stroke="none" />
      <rect x="1" y="11" width="12" height="13" rx="2" fill="#0f56a8" stroke="none" />
      <circle cx="7" cy="17.5" r="3" stroke="#fff" strokeWidth="2" />
    </Ico>],
  ["Revit", "active", <AppTile fill="#1a6dff" edge="#0b48c0" band="#0a2f66" letter="R" sub="RVT" />],
  ["AutoCAD", "run", <AppTile fill="#e01255" edge="#a80a3e" band="#6a0a2c" letter="A" sub="CAD" />],
  ["Snagit", "run", <SnagTile fill="#f05843" />],
  ["Snagit Editor", "run", <SnagTile fill="#3f86bd" />],
  ["Splashtop", "run",
    <Ico s={26} v={26}>
      <rect x="1" y="1" width="24" height="24" rx="5" fill="#f2546b" stroke="none" />
      <path d="M6 13l12-4M8 18l12-4" stroke="#fff" strokeWidth="3" />
      <path d="M10 9l5 9" stroke="#fff" strokeWidth="1.6" />
    </Ico>],
];

const Crop = ({ children }) => (
  <Ico>
    <path d="M4 2v11h10M1 5h10v10" />
    <path d="M10 0v3M0 12h3" stroke="#2e86c4" strokeWidth="2" />
    {children}
  </Ico>
);

const viewIcons = [
  ["Scale detail", <Ico><path d="M1 3h14v10H1z" stroke="#555" /><path d="M3 5l3 2M13 5l-3 2M3 11l3-2M13 11l-3-2M6 6h4v4H6z" stroke="#555" /></Ico>],
  ["Visual style", <Cube />],
  ["Sun path", <Ico><circle cx="6" cy="6" r="3" fill="#f2a52c" stroke="#f2a52c" strokeDasharray="1 1" strokeWidth="4" /><Bulb x={12} y={10} /></Ico>],
  ["Shadows", <Ico><circle cx="6" cy="6" r="4.5" /><path d="M1 13h9" strokeWidth="2" /><Bulb x={12} y={10} /></Ico>],
  ["Render", <Ico><path d="M1 4l3 1h7l1 5-3 3H4zM7 2v2" /><Bulb x={12} y={10} /></Ico>],
  ["Crop off", <Crop><RedX x={10} y={10} s={5} /></Crop>],
  ["Crop region", <Crop><Bulb x={13} y={8} /></Crop>],
  ["Lock view", <Ico><path d="M1 8l7-6 6 6M3 8v7h4M6 9h3v5" strokeWidth="1.6" /><path d="M8 10h6v5H8z" fill="#57b9c6" stroke="#2d98a6" /></Ico>],
  ["Hide", <Glasses size={16} color="#666" />],
  ["Reveal", <Ico><Bulb x={8} y={6} /></Ico>],
  ["Temporary", <Ico><path d="M13 7V5l-3-3H2v10h5" /><path d="M5 5h6v3M9 9h5v5H9z" strokeDasharray="2 1" /></Ico>],
  ["Analytical", <Ico><path d="M2 5l3-3h9v8M2 5h9v9H2zM2 9h9" /><path d="M4 7v8M8 7v8M2 11h8" stroke="#c84b52" /><Bulb x={13} y={10} /></Ico>],
  ["Highlight", <Ico><path d="M5 5l3-3h7v7l-3 3H5z" fill="#7fb0d8" stroke="#456" /><path d="M2 7h7v6H2z" fill="#fff" stroke="#456" /></Ico>],
  ["Constraints", <Ico><path d="M2 1v13M13 1v6M2 4h11M2 12h6" /><Bulb x={12} y={10} /></Ico>],
];

const Cursor = ({ x = 8, y = 6 }) => (
  <path d={`M${x} ${y}l5 6h-2l1 3-2 1-1-3-2 1z`} fill="#fff" stroke="#333" strokeWidth="1" />
);

const pickIcons = [
  ["Select links", <Ico><circle cx="4" cy="4" r="2.5" stroke="#e59246" /><Cursor x={7} /><RedX x={9} y={1} /></Ico>],
  ["Select underlay", <Ico><path d="M1 8l5-5v8z" fill="#4d8fd0" stroke="none" /><Cursor x={7} /><RedX x={9} y={1} /></Ico>],
  ["Select pinned", <Ico><path d="M3 2h4l1 5H2zM5 7v5" /><Cursor /></Ico>],
  ["Select by face", <Ico><path d="M2 5l5-2v10l-5 1z" fill="#3f8fd0" stroke="none" /><Cursor x={7} /><RedX x={9} y={1} /></Ico>],
  ["Drag elements", <Ico><path d="M5 1v9M1 5h9" stroke="#333" strokeWidth="1.5" /><Cursor /></Ico>],
  ["Background", <Ico><circle cx="8" cy="8" r="6" stroke="#999" strokeWidth="2" strokeDasharray="2 2.4" /></Ico>],
];

export default function App() {
  return (
    <App_>
      <GlobalStyle />
      <TopBar />
      <Tabs>
        <RibbonTab href="#file" $kind="file">File</RibbonTab>
        {tabNames.map((name) => (
          <RibbonTab key={name} href={`#${name}`} $kind={name === "CloudWorx" ? "active" : ""}>
            {name}
          </RibbonTab>
        ))}
        <Collapse aria-label="Minimize ribbon">
          <Ico s={14} v={14}>
            <rect x="1" y="2" width="12" height="10" rx="2" stroke="#444" />
            <path d="M5 8l2-3 2 3z" fill="#333" stroke="none" />
          </Ico>
          <Caret />
        </Collapse>
      </Tabs>
      <Ribbon>
        {groups.map((g) => (
          <Group key={g.title} $w={g.w}>
            <GroupBody $pad={g.pad}>
              {g.items.map((item, i) =>
                typeof item[0] === "number" ? (
                  <SmallStack key={i} w={item[0]} items={item.slice(1)} />
                ) : (
                  <BigButton key={i} icon={item[0]} lines={item[1]} w={item[2]} caret={item[3]} />
                )
              )}
            </GroupBody>
            <GroupTitle>{g.title}</GroupTitle>
          </Group>
        ))}
      </Ribbon>
      <OptionsBar><OptionGrip /></OptionsBar>
      <Workspace>
        <LeftColumn>
          <Properties />
          <ProjectBrowser />
        </LeftColumn>
        <ViewColumn>
          <DocTabs>
            <DocTab>
              <Ico>
                <path d="M1 1h9v11H1zM6 5h9v10H6z" fill="#ddd" stroke="#999" />
              </Ico>
              L1 - Architectural
            </DocTab>
            <DocTab $on>
              <HouseIcon s={16} />
              3D View 1
              <Grow />
              <X size={14} color="#444" />
            </DocTab>
            <DocTab>
              <HouseIcon s={16} />
              East - Architectural
            </DocTab>
            <DocMenu aria-label="Tab list">
              <Ico s={10} v={10}>
                <path d="M1 2h8" stroke="#555" strokeWidth="1.6" />
                <path d="M1 5h8l-4 4z" fill="#555" stroke="none" />
              </Ico>
            </DocMenu>
          </DocTabs>
          <CanvasRow>
            <Canvas>
              <PlantModel />
              <ViewToggle aria-label="View mode" />
              <ViewCube />
              <NavBar>
                <NavDot aria-label="Close navigation bar" />
                <button aria-label="Steering wheel">
                  <Ico s={18} v={18}>
                    <path d="M9 1h8v8a8 8 0 1 1-8-8z" fill="#e6eaee" stroke="#9aa5b0" />
                    <circle cx="9" cy="9" r="4" fill="#fff" stroke="#9aa5b0" />
                  </Ico>
                </button>
                <Caret />
                <NavLine />
                <button aria-label="Zoom region">
                  <Ico>
                    <path d="M9 12H2V2h10v6" stroke="#999" />
                    <circle cx="10" cy="9" r="2.5" stroke="#777" />
                    <path d="M12 11l3 4" stroke="#777" strokeWidth="1.8" />
                  </Ico>
                </button>
                <Caret />
                <NavDot aria-label="Navigation options" />
              </NavBar>
              <Classifications />
            </Canvas>
            <VScroll h={15} gap={554} />
          </CanvasRow>
          <ViewBar>
            <Scale>1 : 1</Scale>
            {viewIcons.map(([name, icon]) => (
              <Tool key={name} aria-label={name}>{icon}</Tool>
            ))}
            <HScroll>
              <ChevronLeft size={14} color="#777" />
              <HThumb />
              <ChevronRight size={14} color="#777" />
            </HScroll>
            <Track as="span" />
          </ViewBar>
        </ViewColumn>
      </Workspace>
      <StatusBar>
        <span>Click to select, TAB for alternates, CTRL adds, SHIFT unselects.</span>
        <StatusTools>
          <Tool aria-label="Worksets">
            <Ico>
              <circle cx="5" cy="5" r="3" fill="#4c9bd8" stroke="none" />
              <circle cx="11" cy="5" r="3" fill="#e59246" stroke="none" />
              <path d="M2 8h6v6H3zM9 8h5v6H9z" fill="#4c9bd8" stroke="none" />
              <circle cx="8" cy="9" r="3" fill="#45a557" stroke="none" />
              <path d="M5 11h6v5H5z" fill="#45a557" stroke="none" />
            </Ico>
          </Tool>
          <WorksetBox $w={206} $gap={4}><ChevronDown size={12} color="#aaa" /></WorksetBox>
          <Ico>
            <path d="M8 1h5v6H8zM3 9h6v6H3zM10 7v4" stroke="#888" />
          </Ico>
          <Count>:0</Count>
          <Tool aria-label="Design options">
            <Ico><path d="M1 1h14v14H1z" stroke="#444" /><path d="M1 3h14" stroke="#444" strokeWidth="3" /><path d="M3 7h2M3 10h2M3 13h2M7 7h6M7 10h6M7 13h6" stroke="#444" /></Ico>
          </Tool>
          <Tool aria-label="Edit option">
            <Ico><path d="M3 1h11v12H6M5 5h7M5 8h7M1 11l5-3v6z" stroke="#999" /></Ico>
          </Tool>
          <WorksetBox $w={206} $gap={0}>
            <select disabled aria-label="Design option">
              <option>Main Model</option>
            </select>
            <ChevronDown size={12} color="#aaa" />
          </WorksetBox>
          <Picks>
            {pickIcons.map(([name, icon]) => (
              <Tool key={name} aria-label={name}>{icon}</Tool>
            ))}
            <Tool aria-label="Filter">
              <Ico><path d="M1 2h14l-5 6v7l-4-2V8z" fill="#eee" stroke="#555" /></Ico>
            </Tool>
            :0
          </Picks>
        </StatusTools>
      </StatusBar>
      <Taskbar>
        <StartBtn aria-label="Start">
          <Ico s={23} v={23}>
            <path d="M0 0h11v11H0zM12 0h11v11H12zM0 12h11v11H0zM12 12h11v11H12z" fill="#1488d8" stroke="none" />
          </Ico>
        </StartBtn>
        <TaskSearch>
          <Search size={16} color="#333" />
          <input placeholder="Search" aria-label="Search Windows" />
        </TaskSearch>
        {taskApps.map(([name, state, icon]) => (
          <TaskBtn key={name} $state={state} aria-label={name}>
            {icon}
            {state === "alert" && <Badge>1</Badge>}
            <Run $state={state} />
          </TaskBtn>
        ))}
        <Clock>
          2:21 PM
          <br />
          11/20/2025
        </Clock>
      </Taskbar>
    </App_>
  );
}
